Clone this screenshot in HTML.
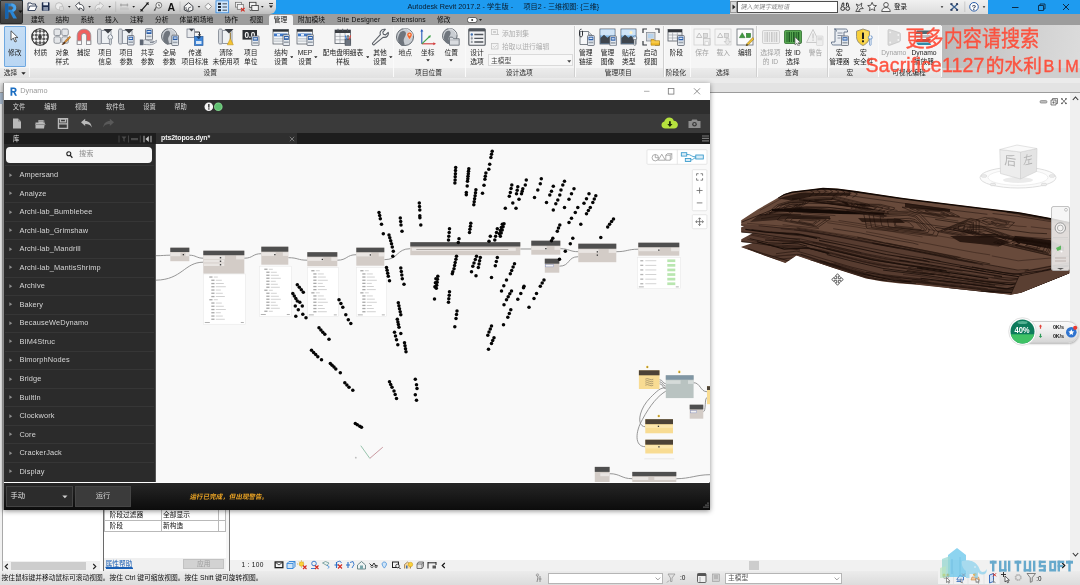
<!DOCTYPE html>
<html lang="zh"><head><meta charset="utf-8"><title>Autodesk Revit 2017.2 - Dynamo</title>
<style>
*{margin:0;padding:0;box-sizing:border-box}
html,body{width:1080px;height:585px;overflow:hidden;background:#fff}
body{font-family:"Liberation Sans","Noto Sans CJK SC",sans-serif;position:relative}
.b{position:absolute;display:block}
.t{position:absolute;white-space:nowrap}
.c{text-align:center}
.it{letter-spacing:.13px}
#blur{position:absolute;left:0;top:0;width:1080px;height:585px;overflow:hidden;filter:blur(.35px)}
</style></head>
<body>
<div id="blur">
<!-- title bar -->
<div class="b" style="left:0px;top:0px;width:1080px;height:14px;background:#1e9bf0;"></div>
<div class="b" style="left:23px;top:0px;width:253px;height:14px;background:linear-gradient(#e9e9e9,#d9d9d9 50%,#bdbdbd);border-radius:0 0 6px 0"></div>
<div class="b" style="left:730px;top:0px;width:258px;height:13.5px;background:linear-gradient(#f1f1f1,#dcdcdc);"></div>
<div class="b" style="left:730px;top:1px;width:7px;height:11.5px;background:#d9d9d9;border:0.5px solid #999"></div>
<svg class="b" style="left:731.5px;top:4px;" width="4" height="6" viewBox="0 0 4 6"><path d="M0.5 0.5L3.5 3L0.5 5.5z" fill="#222"/></svg>
<div class="b" style="left:737.3px;top:0.8px;width:100.9px;height:12px;background:#fff;border:.9px solid #4e4e4e"></div>
<div class="t " style="left:741px;top:3.34px;font-size:6.1px;line-height:7.32px;color:#858585;transform:skewX(-12deg)">键入关键字或短语</div>
<div class="t " style="left:894px;top:3.10px;font-size:6.5px;line-height:7.80px;color:#111;">登录</div>
<div class="t " style="left:407.5px;top:2.65px;font-size:7.25px;line-height:8.70px;color:#0a1a2a;">Autodesk Revit 2017.2 - 学生版 -</div>
<div class="t " style="left:523.5px;top:2.74px;font-size:7.1px;line-height:8.52px;color:#0a1a2a;">项目2 - 三维视图: {三维}</div>
<svg class="b" style="left:1008px;top:0px;" width="70" height="14" viewBox="0 0 70 14"><path d="M4 7.5h6.5" stroke="#0d2a44" stroke-width="1"/><path d="M30.5 5.5h5v5h-5zM32 5.5v-1.5h5v5h-1.5" fill="none" stroke="#0d2a44" stroke-width=".9"/><path d="M55 4l6 6M61 4l-6 6" stroke="#0d2a44" stroke-width="1"/></svg>
<!-- ribbon tabs -->
<div class="b" style="left:0px;top:14px;width:1080px;height:10.5px;background:#9d9d9d;"></div>
<div class="b" style="left:269px;top:14.5px;width:24px;height:10.5px;background:#f1f1f1;border-radius:2px 2px 0 0"></div>
<div class="t " style="left:31px;top:15.55px;font-size:6.75px;line-height:8.10px;color:#0c0c0c;">建筑</div>
<div class="t " style="left:55.5px;top:15.55px;font-size:6.75px;line-height:8.10px;color:#0c0c0c;">结构</div>
<div class="t " style="left:80.5px;top:15.55px;font-size:6.75px;line-height:8.10px;color:#0c0c0c;">系统</div>
<div class="t " style="left:105px;top:15.55px;font-size:6.75px;line-height:8.10px;color:#0c0c0c;">插入</div>
<div class="t " style="left:130px;top:15.55px;font-size:6.75px;line-height:8.10px;color:#0c0c0c;">注释</div>
<div class="t " style="left:155px;top:15.55px;font-size:6.75px;line-height:8.10px;color:#0c0c0c;">分析</div>
<div class="t " style="left:179.5px;top:15.55px;font-size:6.75px;line-height:8.10px;color:#0c0c0c;">体量和场地</div>
<div class="t " style="left:224.5px;top:15.55px;font-size:6.75px;line-height:8.10px;color:#0c0c0c;">协作</div>
<div class="t " style="left:249.5px;top:15.55px;font-size:6.75px;line-height:8.10px;color:#0c0c0c;">视图</div>
<div class="t " style="left:273.7px;top:15.55px;font-size:6.75px;line-height:8.10px;color:#0c0c0c;">管理</div>
<div class="t " style="left:298px;top:15.55px;font-size:6.75px;line-height:8.10px;color:#0c0c0c;">附加模块</div>
<div class="t " style="left:337px;top:15.55px;font-size:6.75px;line-height:8.10px;color:#0c0c0c;letter-spacing:.22px">Site Designer</div>
<div class="t " style="left:391.5px;top:15.55px;font-size:6.75px;line-height:8.10px;color:#0c0c0c;letter-spacing:.12px">Extensions</div>
<div class="t " style="left:437px;top:15.55px;font-size:6.75px;line-height:8.10px;color:#0c0c0c;">修改</div>
<svg class="b" style="left:467px;top:16.5px;" width="16" height="6" viewBox="0 0 16 6"><rect x=".5" y=".5" width="9.5" height="5" rx="2" fill="#fdfdfd" stroke="#333" stroke-width=".7"/><circle cx="5.2" cy="3" r="1" fill="#333"/><path d="M12 2h3l-1.500 2z" fill="#222"/></svg>
<div class="b" style="left:0px;top:0px;width:23px;height:23.5px;background:linear-gradient(#6b6b6b,#4a4a4a 50%,#3d3d3d);border:0.5px solid #2c2c2c;border-radius:0 0 2px 0"></div>
<svg class="b" style="left:2.5px;top:2px;" width="16" height="18" viewBox="0 0 16 18"><path d="M2 1.5h6.2c3.2 0 5 1.6 5 4.3c0 2.1-1.2 3.5-3.1 4l3.9 6.7h-3.7l-3.3-6.2h-1.7v6.2h-3.3zM5.3 4.2v3.6h2.5c1.4 0 2.1-.7 2.1-1.8c0-1.2-.8-1.8-2.1-1.8z" fill="#2a86d6"/><path d="M2 1.5h3.3v15h-3.3z" fill="#1763ad"/><path d="M8.2 1.5c3.2 0 5 1.6 5 4.3c0 2.100-1.2 3.500-3.100 4l-1.2-2c1-.2 1.6-.9 1.6-1.800c0-1.200-.8-1.800-2.100-1.800z" fill="#4aa3ea"/></svg>
<svg class="b" style="left:18px;top:10px;" width="5" height="4" viewBox="0 0 5 4"><path d="M.5 .5h4l-2 2.500z" fill="#111"/></svg>
<!-- ribbon -->
<div class="b" style="left:0px;top:24.5px;width:1080px;height:43.5px;background:#f5f5f5;"></div>
<div class="b" style="left:941px;top:24.5px;width:139px;height:43.5px;background:linear-gradient(100deg,#b9b9b9,#cfcfcf 55%,#dcdcdc);"></div>
<div class="b" style="left:0px;top:68px;width:1080px;height:9.5px;background:linear-gradient(#ececec,#e1e1e1);"></div>
<div class="b" style="left:941px;top:68px;width:139px;height:9.5px;background:#cfcfcf;"></div>
<div class="b" style="left:0px;top:77.5px;width:1080px;height:5.5px;background:#ebebeb;"></div>
<div class="b" style="left:4px;top:26px;width:21.5px;height:40.5px;background:linear-gradient(#c6def5,#b9d6f3);border:0.8px solid #6fa8e0;border-radius:1px"></div>
<svg class="b" style="left:10px;top:30px;" width="9" height="13" viewBox="0 0 9 13"><path d="M1 .8v9.400l2.300-2.100l1.700 3.900l1.500-.7l-1.700-3.700h3.100z" fill="#fff" stroke="#333" stroke-width=".8" stroke-linejoin="round"/></svg>
<div class="t c " style="left:-85.3px;width:200px;top:48.65px;font-size:6.75px;line-height:8.10px;color:#1c1c1c;">修改</div>
<div class="t " style="left:3.7px;top:69.35px;font-size:6.75px;line-height:8.10px;color:#1c1c1c;">选择</div>
<svg class="b" style="left:20.5px;top:71.5px;" width="5" height="3" viewBox="0 0 5 3"><path d="M.3 .3h4.400l-2.200 2.400z" fill="#222"/></svg>
<div class="b" style="left:28.5px;top:26px;width:0.8px;height:51px;background:#d0d0d0;"></div>
<div class="b" style="left:29.3px;top:26px;width:0.8px;height:51px;background:#fafafa;"></div>
<div class="b" style="left:392.5px;top:26px;width:0.8px;height:51px;background:#d0d0d0;"></div>
<div class="b" style="left:393.3px;top:26px;width:0.8px;height:51px;background:#fafafa;"></div>
<div class="b" style="left:464.5px;top:26px;width:0.8px;height:51px;background:#d0d0d0;"></div>
<div class="b" style="left:465.3px;top:26px;width:0.8px;height:51px;background:#fafafa;"></div>
<div class="b" style="left:573.7px;top:26px;width:0.8px;height:51px;background:#d0d0d0;"></div>
<div class="b" style="left:574.5px;top:26px;width:0.8px;height:51px;background:#fafafa;"></div>
<div class="b" style="left:663px;top:26px;width:0.8px;height:51px;background:#d0d0d0;"></div>
<div class="b" style="left:663.8px;top:26px;width:0.8px;height:51px;background:#fafafa;"></div>
<div class="b" style="left:689.5px;top:26px;width:0.8px;height:51px;background:#d0d0d0;"></div>
<div class="b" style="left:690.3px;top:26px;width:0.8px;height:51px;background:#fafafa;"></div>
<div class="b" style="left:756px;top:26px;width:0.8px;height:51px;background:#d0d0d0;"></div>
<div class="b" style="left:756.8px;top:26px;width:0.8px;height:51px;background:#fafafa;"></div>
<div class="b" style="left:827px;top:26px;width:0.8px;height:51px;background:#d0d0d0;"></div>
<div class="b" style="left:827.8px;top:26px;width:0.8px;height:51px;background:#fafafa;"></div>
<div class="b" style="left:877.5px;top:26px;width:0.8px;height:51px;background:#d0d0d0;"></div>
<div class="b" style="left:878.3px;top:26px;width:0.8px;height:51px;background:#fafafa;"></div>
<div class="b" style="left:940.5px;top:26px;width:0.8px;height:51px;background:#d0d0d0;"></div>
<div class="b" style="left:941.3px;top:26px;width:0.8px;height:51px;background:#fafafa;"></div>
<div class="t c " style="left:-59.5px;width:200px;top:48.95px;font-size:6.75px;line-height:8.10px;color:#1c1c1c;">材质</div>
<div class="t c " style="left:-37.8px;width:200px;top:48.95px;font-size:6.75px;line-height:8.10px;color:#1c1c1c;">对象</div>
<div class="t c " style="left:-37.8px;width:200px;top:57.85px;font-size:6.75px;line-height:8.10px;color:#1c1c1c;">样式</div>
<div class="t c " style="left:-16.5px;width:200px;top:48.95px;font-size:6.75px;line-height:8.10px;color:#1c1c1c;">捕捉</div>
<div class="t c " style="left:5px;width:200px;top:48.95px;font-size:6.75px;line-height:8.10px;color:#1c1c1c;">项目</div>
<div class="t c " style="left:5px;width:200px;top:57.85px;font-size:6.75px;line-height:8.10px;color:#1c1c1c;">信息</div>
<div class="t c " style="left:26.200000000000003px;width:200px;top:48.95px;font-size:6.75px;line-height:8.10px;color:#1c1c1c;">项目</div>
<div class="t c " style="left:26.200000000000003px;width:200px;top:57.85px;font-size:6.75px;line-height:8.10px;color:#1c1c1c;">参数</div>
<div class="t c " style="left:47.5px;width:200px;top:48.95px;font-size:6.75px;line-height:8.10px;color:#1c1c1c;">共享</div>
<div class="t c " style="left:47.5px;width:200px;top:57.85px;font-size:6.75px;line-height:8.10px;color:#1c1c1c;">参数</div>
<div class="t c " style="left:69.19999999999999px;width:200px;top:48.95px;font-size:6.75px;line-height:8.10px;color:#1c1c1c;">全局</div>
<div class="t c " style="left:69.19999999999999px;width:200px;top:57.85px;font-size:6.75px;line-height:8.10px;color:#1c1c1c;">参数</div>
<div class="t c " style="left:95px;width:200px;top:48.95px;font-size:6.75px;line-height:8.10px;color:#1c1c1c;">传递</div>
<div class="t c " style="left:95px;width:200px;top:57.85px;font-size:6.75px;line-height:8.10px;color:#1c1c1c;">项目标准</div>
<div class="t c " style="left:126px;width:200px;top:48.95px;font-size:6.75px;line-height:8.10px;color:#1c1c1c;">清除</div>
<div class="t c " style="left:126px;width:200px;top:57.85px;font-size:6.75px;line-height:8.10px;color:#1c1c1c;">未使用项</div>
<div class="t c " style="left:150.7px;width:200px;top:48.95px;font-size:6.75px;line-height:8.10px;color:#1c1c1c;">项目</div>
<div class="t c " style="left:150.7px;width:200px;top:57.85px;font-size:6.75px;line-height:8.10px;color:#1c1c1c;">单位</div>
<div class="t c " style="left:181px;width:200px;top:48.95px;font-size:6.75px;line-height:8.10px;color:#1c1c1c;">结构</div>
<div class="t c " style="left:181px;width:200px;top:57.85px;font-size:6.75px;line-height:8.10px;color:#1c1c1c;">设置</div>
<div class="t c " style="left:205px;width:200px;top:48.95px;font-size:6.75px;line-height:8.10px;color:#1c1c1c;">MEP</div>
<div class="t c " style="left:205px;width:200px;top:57.85px;font-size:6.75px;line-height:8.10px;color:#1c1c1c;">设置</div>
<div class="t c " style="left:243px;width:200px;top:48.95px;font-size:6.75px;line-height:8.10px;color:#1c1c1c;">配电盘明细表</div>
<div class="t c " style="left:243px;width:200px;top:57.85px;font-size:6.75px;line-height:8.10px;color:#1c1c1c;">样板</div>
<div class="t c " style="left:280px;width:200px;top:48.95px;font-size:6.75px;line-height:8.10px;color:#1c1c1c;">其他</div>
<div class="t c " style="left:280px;width:200px;top:57.85px;font-size:6.75px;line-height:8.10px;color:#1c1c1c;">设置</div>
<div class="t c " style="left:305.3px;width:200px;top:48.95px;font-size:6.75px;line-height:8.10px;color:#1c1c1c;">地点</div>
<div class="t c " style="left:327.7px;width:200px;top:48.95px;font-size:6.75px;line-height:8.10px;color:#1c1c1c;">坐标</div>
<svg class="b" style="left:425.7px;top:58.8px;" width="4" height="3" viewBox="0 0 4 3"><path d="M.2 .3h3.600l-1.800 2.200z" fill="#222"/></svg>
<div class="t c " style="left:351.2px;width:200px;top:48.95px;font-size:6.75px;line-height:8.10px;color:#1c1c1c;">位置</div>
<svg class="b" style="left:449.2px;top:58.8px;" width="4" height="3" viewBox="0 0 4 3"><path d="M.2 .3h3.600l-1.800 2.200z" fill="#222"/></svg>
<div class="t c " style="left:377px;width:200px;top:48.95px;font-size:6.75px;line-height:8.10px;color:#1c1c1c;">设计</div>
<div class="t c " style="left:377px;width:200px;top:57.85px;font-size:6.75px;line-height:8.10px;color:#1c1c1c;">选项</div>
<div class="t c " style="left:485.70000000000005px;width:200px;top:48.95px;font-size:6.75px;line-height:8.10px;color:#1c1c1c;">管理</div>
<div class="t c " style="left:485.70000000000005px;width:200px;top:57.85px;font-size:6.75px;line-height:8.10px;color:#1c1c1c;">链接</div>
<div class="t c " style="left:507.4px;width:200px;top:48.95px;font-size:6.75px;line-height:8.10px;color:#1c1c1c;">管理</div>
<div class="t c " style="left:507.4px;width:200px;top:57.85px;font-size:6.75px;line-height:8.10px;color:#1c1c1c;">图像</div>
<div class="t c " style="left:528.8px;width:200px;top:48.95px;font-size:6.75px;line-height:8.10px;color:#1c1c1c;">贴花</div>
<div class="t c " style="left:528.8px;width:200px;top:57.85px;font-size:6.75px;line-height:8.10px;color:#1c1c1c;">类型</div>
<div class="t c " style="left:550.6px;width:200px;top:48.95px;font-size:6.75px;line-height:8.10px;color:#1c1c1c;">启动</div>
<div class="t c " style="left:550.6px;width:200px;top:57.85px;font-size:6.75px;line-height:8.10px;color:#1c1c1c;">视图</div>
<div class="t c " style="left:576.2px;width:200px;top:48.95px;font-size:6.75px;line-height:8.10px;color:#1c1c1c;">阶段</div>
<div class="t c " style="left:602px;width:200px;top:48.95px;font-size:6.75px;line-height:8.10px;color:#a2a2a2;">保存</div>
<div class="t c " style="left:623.3px;width:200px;top:48.95px;font-size:6.75px;line-height:8.10px;color:#a2a2a2;">载入</div>
<div class="t c " style="left:644.8px;width:200px;top:48.95px;font-size:6.75px;line-height:8.10px;color:#1c1c1c;">编辑</div>
<div class="t c " style="left:670.5px;width:200px;top:48.95px;font-size:6.75px;line-height:8.10px;color:#a2a2a2;">选择项</div>
<div class="t c " style="left:670.5px;width:200px;top:57.85px;font-size:6.75px;line-height:8.10px;color:#a2a2a2;">的 ID</div>
<div class="t c " style="left:693px;width:200px;top:48.95px;font-size:6.75px;line-height:8.10px;color:#1c1c1c;">按 ID</div>
<div class="t c " style="left:693px;width:200px;top:57.85px;font-size:6.75px;line-height:8.10px;color:#1c1c1c;">选择</div>
<div class="t c " style="left:715.5px;width:200px;top:48.95px;font-size:6.75px;line-height:8.10px;color:#a2a2a2;">警告</div>
<div class="t c " style="left:739.5px;width:200px;top:48.95px;font-size:6.75px;line-height:8.10px;color:#1c1c1c;">宏</div>
<div class="t c " style="left:739.5px;width:200px;top:57.85px;font-size:6.75px;line-height:8.10px;color:#1c1c1c;">管理器</div>
<div class="t c " style="left:763.5px;width:200px;top:48.95px;font-size:6.75px;line-height:8.10px;color:#1c1c1c;">宏</div>
<div class="t c " style="left:763.5px;width:200px;top:57.85px;font-size:6.75px;line-height:8.10px;color:#1c1c1c;">安全性</div>
<div class="t c " style="left:793.8px;width:200px;top:48.95px;font-size:6.75px;line-height:8.10px;color:#a2a2a2;">Dynamo</div>
<div class="t c " style="left:824px;width:200px;top:48.95px;font-size:6.75px;line-height:8.10px;color:#1c1c1c;">Dynamo</div>
<div class="t c " style="left:824px;width:200px;top:57.85px;font-size:6.75px;line-height:8.10px;color:#1c1c1c;">播放器</div>
<svg class="b" style="left:289.5px;top:55.5px;" width="3.6" height="2.6" viewBox="0 0 3.6 2.6"><path d="M.1 .2h3.400l-1.700 2.100z" fill="#222"/></svg>
<svg class="b" style="left:314px;top:55.5px;" width="3.6" height="2.6" viewBox="0 0 3.6 2.6"><path d="M.1 .2h3.400l-1.700 2.100z" fill="#222"/></svg>
<svg class="b" style="left:365.5px;top:55.5px;" width="3.6" height="2.6" viewBox="0 0 3.6 2.6"><path d="M.1 .2h3.400l-1.700 2.100z" fill="#222"/></svg>
<svg class="b" style="left:389px;top:55.5px;" width="3.6" height="2.6" viewBox="0 0 3.6 2.6"><path d="M.1 .2h3.400l-1.700 2.100z" fill="#222"/></svg>
<div class="t c " style="left:110.19999999999999px;width:200px;top:69.35px;font-size:6.75px;line-height:8.10px;color:#2a2a2a;">设置</div>
<div class="t c " style="left:328.5px;width:200px;top:69.35px;font-size:6.75px;line-height:8.10px;color:#2a2a2a;">项目位置</div>
<div class="t c " style="left:419.20000000000005px;width:200px;top:69.35px;font-size:6.75px;line-height:8.10px;color:#2a2a2a;">设计选项</div>
<div class="t c " style="left:518.3px;width:200px;top:69.35px;font-size:6.75px;line-height:8.10px;color:#2a2a2a;">管理项目</div>
<div class="t c " style="left:576px;width:200px;top:69.35px;font-size:6.75px;line-height:8.10px;color:#2a2a2a;">阶段化</div>
<div class="t c " style="left:622.8px;width:200px;top:69.35px;font-size:6.75px;line-height:8.10px;color:#2a2a2a;">选择</div>
<div class="t c " style="left:691.8px;width:200px;top:69.35px;font-size:6.75px;line-height:8.10px;color:#2a2a2a;">查询</div>
<div class="t c " style="left:750px;width:200px;top:69.35px;font-size:6.75px;line-height:8.10px;color:#2a2a2a;">宏</div>
<div class="t c " style="left:809px;width:200px;top:69.35px;font-size:6.75px;line-height:8.10px;color:#2a2a2a;">可视化编程</div>
<div class="t " style="left:502px;top:29.85px;font-size:6.75px;line-height:8.10px;color:#adadad;">添加到集</div>
<div class="t " style="left:502px;top:43.45px;font-size:6.75px;line-height:8.10px;color:#adadad;">拾取以进行编辑</div>
<div class="b" style="left:488px;top:24.5px;width:85px;height:30px;overflow:hidden"></div>
<div class="b" style="left:487.5px;top:54.3px;width:85.5px;height:11.7px;background:#f8f8f8;border:0.6px solid #dadada"></div>
<div class="t " style="left:491px;top:56.55px;font-size:6.75px;line-height:8.10px;color:#4a4a4a;">主模型</div>
<svg class="b" style="left:567px;top:59.5px;" width="4.5" height="3" viewBox="0 0 4.5 3"><path d="M.2 .3h4l-2 2.400z" fill="#444"/></svg>
<!-- revit body -->
<div class="b" style="left:0px;top:83px;width:1080px;height:10px;background:#e3e3e3;"></div>
<div class="b" style="left:0px;top:92px;width:1080px;height:1px;background:#9b9b9b;"></div>
<div class="b" style="left:0px;top:93px;width:1080px;height:478px;background:#fff;"></div>
<div class="b" style="left:0px;top:93px;width:3px;height:478px;background:#f1f1f1;"></div>
<div class="b" style="left:2px;top:104px;width:0.8px;height:467px;background:#a9a9a9;"></div>
<div class="b" style="left:0px;top:93px;width:3px;height:11px;background:#a9bace;"></div>
<div class="b" style="left:1070px;top:93px;width:10px;height:467px;background:#f0f0f0;"></div>
<svg class="b" style="left:1072px;top:96px;" width="7" height="5" viewBox="0 0 7 5"><path d="M.8 4l2.700-3l2.700 3" fill="none" stroke="#333" stroke-width="1.1"/></svg>
<svg class="b" style="left:1072px;top:552px;" width="7" height="5" viewBox="0 0 7 5"><path d="M.8 1l2.700 3l2.700-3" fill="none" stroke="#333" stroke-width="1.1"/></svg>
<svg class="b" style="left:1039px;top:97px;" width="30" height="9" viewBox="0 0 30 9"><rect x="1" y="3.500" width="7" height="2.600" rx="1.200" fill="#bbb" stroke="#777" stroke-width=".6"/><path d="M12 3h5v5h-5zM13.500 3v-1.500h5v5h-1.500" fill="#eee" stroke="#555" stroke-width=".7"/><path d="M14.500 4.200v2.600M13.300 5.500h2.400" stroke="#555" stroke-width=".6"/><path d="M22.500 1.500l5 5.500M27.500 1.500l-5 5.500" stroke="#555" stroke-width=".8"/><rect x="22.200" y="1.200" width="1.400" height="1.400" fill="#555"/><rect x="26.200" y="1.200" width="1.400" height="1.400" fill="#555"/><rect x="22.200" y="5.700" width="1.400" height="1.400" fill="#555"/><rect x="26.200" y="5.700" width="1.400" height="1.400" fill="#555"/></svg>
<div class="b" style="left:100px;top:510px;width:4px;height:61px;background:#fbfbfb;"></div>
<div class="b" style="left:102.8px;top:510px;width:0.9px;height:61px;background:#6a6a6a;"></div>
<div class="b" style="left:104px;top:557.5px;width:122px;height:13px;background:#f0f0f0;"></div>
<div class="b" style="left:226px;top:510px;width:4px;height:61px;background:#f6f6f6;"></div>
<div class="b" style="left:229.3px;top:510px;width:0.9px;height:61px;background:#7a7a7a;"></div>
<div class="b" style="left:3px;top:561px;width:97px;height:9.5px;background:#f0f0f0;"></div>
<div class="b" style="left:11px;top:561.5px;width:75px;height:8.5px;background:#cdcdcd;"></div>
<svg class="b" style="left:4px;top:562.5px;" width="5" height="7" viewBox="0 0 5 7"><path d="M3.800 1l-2.600 2.500l2.600 2.500" fill="none" stroke="#222" stroke-width="1.100"/></svg>
<svg class="b" style="left:92px;top:562.5px;" width="5" height="7" viewBox="0 0 5 7"><path d="M1.200 1l2.600 2.500l-2.600 2.500" fill="none" stroke="#222" stroke-width="1.100"/></svg>
<div class="b" style="left:104px;top:510px;width:122px;height:21.5px;background:#fff;border-bottom:.7px solid #b9b9b9;border-left:.7px solid #b9b9b9"></div>
<div class="b" style="left:104px;top:519.8px;width:122px;height:0.7px;background:#b9b9b9;"></div>
<div class="b" style="left:161px;top:510px;width:0.7px;height:21.5px;background:#b9b9b9;"></div>
<div class="b" style="left:218.4px;top:510px;width:0.7px;height:21.5px;background:#b9b9b9;"></div>
<div class="b" style="left:225.3px;top:510px;width:0.7px;height:21.5px;background:#b9b9b9;"></div>
<div class="t " style="left:109.5px;top:510.75px;font-size:6.75px;line-height:8.10px;color:#111;">阶段过滤器</div>
<div class="t " style="left:163px;top:510.75px;font-size:6.75px;line-height:8.10px;color:#111;">全部显示</div>
<div class="t " style="left:109.5px;top:521.55px;font-size:6.75px;line-height:8.10px;color:#111;">阶段</div>
<div class="t " style="left:163px;top:521.55px;font-size:6.75px;line-height:8.10px;color:#111;">新构造</div>
<div class="t " style="left:105.5px;top:560.45px;font-size:6.75px;line-height:8.10px;color:#1a5fb4;text-decoration:underline;border-bottom:.6px solid #1a5fb4;line-height:7.400px">属性帮助</div>
<div class="b" style="left:183.3px;top:559px;width:40.7px;height:10px;background:#d2d2d2;border:.6px solid #c2c2c2"></div>
<div class="t c " style="left:103.69999999999999px;width:200px;top:560.25px;font-size:6.75px;line-height:8.10px;color:#9c9c9c;">应用</div>
<div class="b" style="left:1070px;top:560px;width:10px;height:11px;background:#f0f0f0;"></div>
<div class="b" style="left:230px;top:560px;width:840px;height:10.5px;background:#f1f1f1;"></div>
<div class="b" style="left:749px;top:561px;width:10px;height:9px;background:#cdcdcd;"></div>
<div class="t " style="left:241.5px;top:561.34px;font-size:6.6px;line-height:7.92px;color:#111;letter-spacing:.3px">1 : 100</div>
<svg class="b" style="left:441px;top:562px;" width="5" height="7" viewBox="0 0 5 7"><path d="M3.800 1l-2.600 2.500l2.600 2.500" fill="none" stroke="#111" stroke-width="1.100"/></svg>
<svg class="b" style="left:1061px;top:562px;" width="5" height="7" viewBox="0 0 5 7"><path d="M1.200 1l2.600 2.500l-2.600 2.500" fill="none" stroke="#111" stroke-width="1.100"/></svg>
<div class="b" style="left:0px;top:570.5px;width:1080px;height:0.8px;background:#fdfdfd;"></div>
<div class="b" style="left:0px;top:571.3px;width:1080px;height:13.7px;background:linear-gradient(#ececec,#dcdcdc);"></div>
<div class="t " style="left:1.5px;top:574.25px;font-size:6.75px;line-height:8.10px;color:#111;">按住鼠标键并移动鼠标可滚动视图。按住 Ctrl 键可缩放视图。按住 Shift 键可旋转视图。</div>
<div class="b" style="left:548px;top:573px;width:114.5px;height:10.5px;background:#fff;border:.6px solid #b5b5b5"></div>
<svg class="b" style="left:654.5px;top:576.5px;" width="6" height="4" viewBox="0 0 6 4"><path d="M.6 .6l2.300 2.300l2.300-2.300" fill="none" stroke="#888" stroke-width=".8"/></svg>
<div class="t " style="left:680px;top:574.40px;font-size:6.5px;line-height:7.80px;color:#111;">:0</div>
<div class="b" style="left:725px;top:573px;width:116.5px;height:10.5px;background:#fff;border:.6px solid #b5b5b5"></div>
<div class="t " style="left:728px;top:574.25px;font-size:6.75px;line-height:8.10px;color:#555;">主模型</div>
<svg class="b" style="left:833.5px;top:576.5px;" width="6" height="4" viewBox="0 0 6 4"><path d="M.6 .6l2.300 2.300l2.300-2.300" fill="none" stroke="#888" stroke-width=".8"/></svg>
<div class="t " style="left:1036.3px;top:574.72px;font-size:6.3px;line-height:7.56px;color:#111;">:0</div>
<!-- ribbon icons -->
<svg class="b" style="left:31.3px;top:27.6px;" width="18" height="18" viewBox="0 0 18 18"><defs><clipPath id="mc"><circle cx="9" cy="9" r="8.300"/></clipPath></defs><circle cx="9" cy="9" r="8.300" fill="#f4f4f4"/><g clip-path="url(#mc)"><g transform="rotate(45 9 9)" fill="#585858"><rect x="-4.50" y="-4.50" width="2.7" height="2.7"/><rect x="-4.50" y="0.90" width="2.7" height="2.7"/><rect x="-4.50" y="6.30" width="2.7" height="2.7"/><rect x="-4.50" y="11.70" width="2.7" height="2.7"/><rect x="-4.50" y="17.10" width="2.7" height="2.7"/><rect x="-1.80" y="-1.80" width="2.7" height="2.7"/><rect x="-1.80" y="3.60" width="2.7" height="2.7"/><rect x="-1.80" y="9.00" width="2.7" height="2.7"/><rect x="-1.80" y="14.40" width="2.7" height="2.7"/><rect x="-1.80" y="19.80" width="2.7" height="2.7"/><rect x="0.90" y="-4.50" width="2.7" height="2.7"/><rect x="0.90" y="0.90" width="2.7" height="2.7"/><rect x="0.90" y="6.30" width="2.7" height="2.7"/><rect x="0.90" y="11.70" width="2.7" height="2.7"/><rect x="0.90" y="17.10" width="2.7" height="2.7"/><rect x="3.60" y="-1.80" width="2.7" height="2.7"/><rect x="3.60" y="3.60" width="2.7" height="2.7"/><rect x="3.60" y="9.00" width="2.7" height="2.7"/><rect x="3.60" y="14.40" width="2.7" height="2.7"/><rect x="3.60" y="19.80" width="2.7" height="2.7"/><rect x="6.30" y="-4.50" width="2.7" height="2.7"/><rect x="6.30" y="0.90" width="2.7" height="2.7"/><rect x="6.30" y="6.30" width="2.7" height="2.7"/><rect x="6.30" y="11.70" width="2.7" height="2.7"/><rect x="6.30" y="17.10" width="2.7" height="2.7"/><rect x="9.00" y="-1.80" width="2.7" height="2.7"/><rect x="9.00" y="3.60" width="2.7" height="2.7"/><rect x="9.00" y="9.00" width="2.7" height="2.7"/><rect x="9.00" y="14.40" width="2.7" height="2.7"/><rect x="9.00" y="19.80" width="2.7" height="2.7"/><rect x="11.70" y="-4.50" width="2.7" height="2.7"/><rect x="11.70" y="0.90" width="2.7" height="2.7"/><rect x="11.70" y="6.30" width="2.7" height="2.7"/><rect x="11.70" y="11.70" width="2.7" height="2.7"/><rect x="11.70" y="17.10" width="2.7" height="2.7"/><rect x="14.40" y="-1.80" width="2.7" height="2.7"/><rect x="14.40" y="3.60" width="2.7" height="2.7"/><rect x="14.40" y="9.00" width="2.7" height="2.7"/><rect x="14.40" y="14.40" width="2.7" height="2.7"/><rect x="14.40" y="19.80" width="2.7" height="2.7"/><rect x="17.10" y="-4.50" width="2.7" height="2.7"/><rect x="17.10" y="0.90" width="2.7" height="2.7"/><rect x="17.10" y="6.30" width="2.7" height="2.7"/><rect x="17.10" y="11.70" width="2.7" height="2.7"/><rect x="17.10" y="17.10" width="2.7" height="2.7"/><rect x="19.80" y="-1.80" width="2.7" height="2.7"/><rect x="19.80" y="3.60" width="2.7" height="2.7"/><rect x="19.80" y="9.00" width="2.7" height="2.7"/><rect x="19.80" y="14.40" width="2.7" height="2.7"/><rect x="19.80" y="19.80" width="2.7" height="2.7"/></g></g><circle cx="9" cy="9" r="8.300" fill="none" stroke="#2f2f2f" stroke-width="1.100"/><circle cx="9" cy="9" r="1.900" fill="#3a3a3a"/></svg>
<svg class="b" style="left:53.2px;top:27.6px;" width="18" height="18" viewBox="0 0 18 18"><g fill="#e4e6e9" stroke="#7d838b" stroke-width=".8"><rect x="1" y="1" width="6.500" height="6.500" rx="1.500"/><rect x="8.800" y="1" width="6.500" height="6.500" rx="1.500"/><rect x="1" y="8.800" width="6.500" height="6.500" rx="1.500"/><rect x="8.800" y="8.800" width="6.500" height="6.500" rx="1.500"/></g><path d="M17.800 9.300l-5 5.200l-1.300-1.300l5.200-5z" fill="#d98a2b" stroke="#7a4a12" stroke-width=".4"/><path d="M12.700 14.600c-.8 1.800-2.300 2.400-4.200 2.300c1.200-.8 1.300-2 2.600-3.500z" fill="#5a3518"/></svg>
<svg class="b" style="left:74.5px;top:27.6px;" width="18" height="18" viewBox="0 0 18 18"><path d="M2.200 16.500v-8.700c0-4 2.900-6.600 6.800-6.600s6.800 2.600 6.800 6.600v8.700h-4.300v-8.600c0-1.600-1-2.500-2.500-2.500s-2.500.9-2.500 2.500v8.600z" fill="#f0605f" stroke="#8d8f94" stroke-width=".8"/><rect x="2.200" y="12.800" width="4.300" height="3.700" fill="#fafafa" stroke="#8d8f94" stroke-width=".8"/><rect x="11.500" y="12.800" width="4.300" height="3.700" fill="#fafafa" stroke="#8d8f94" stroke-width=".8"/></svg>
<svg class="b" style="left:96px;top:27.6px;" width="18" height="18" viewBox="0 0 18 18"><path d="M1.500 2.500c0-1 .7-1.500 1.500-1.500h1c.8 0 1.400.6 1.400 1.500v12c0 1-.6 1.500-1.400 1.500h-1c-.8 0-1.500-.5-1.500-1.500z" fill="#d5d9de" stroke="#6b7380" stroke-width=".7"/><path d="M5.400 2.500h9.600v13h-9.600z" fill="#eef1f4" stroke="#6b7380" stroke-width=".7"/><path d="M7.500 1h9l-4.500 4.600z" fill="#3b3f46"/><circle cx="14.300" cy="9.300" r="2.300" fill="#eef1f4" stroke="#6b7380" stroke-width=".8"/><rect x="13.400" y="10.800" width="1.800" height="6" rx=".8" fill="#eef1f4" stroke="#6b7380" stroke-width=".7"/><rect x="13.600" y="7" width="1.400" height="2" fill="#eef1f4"/></svg>
<svg class="b" style="left:117.2px;top:27.6px;" width="18" height="18" viewBox="0 0 18 18"><path d="M1.500 2.500c0-1 .7-1.500 1.500-1.500h1c.8 0 1.400.6 1.400 1.500v12c0 1-.6 1.500-1.400 1.500h-1c-.8 0-1.500-.5-1.500-1.500z" fill="#d5d9de" stroke="#6b7380" stroke-width=".7"/><path d="M5.400 2.500h9.600v13h-9.600z" fill="#eef1f4" stroke="#6b7380" stroke-width=".7"/><path d="M7.500 1h9l-4.500 4.600z" fill="#3b3f46"/><rect x="10.5" y="7.5" width="6.5" height="9.5" rx=".8" fill="#e6eaef" stroke="#4a525e" stroke-width=".7"/><rect x="11.5" y="8.7" width="4.5" height="3.4" fill="#2b5ea8"/><rect x="12.3" y="9.7" width="2.9" height="1.300" fill="#dce9f8"/><rect x="11.5" y="13.4" width="4.5" height="1.600" fill="#9aa3ad"/></svg>
<svg class="b" style="left:138.7px;top:27.6px;" width="18" height="18" viewBox="0 0 18 18"><path d="M.8 11.500h3.500v5.700h-3.500z" fill="#5d6673"/><path d="M4.300 12.500c1.500-1 3-1.200 4.300-.3c1 .7 2 .8 3.200.8h2.200c1 0 1 1.300 0 1.400h-3c2 .4 4.500-.6 6-1.800c1-.6 1.700.5.9 1.200c-2.300 2-4.500 3-7.500 3c-2 0-4-.5-6.100-.3z" fill="#dfe3e7" stroke="#69717c" stroke-width=".6"/><rect x="6.5" y="0.8" width="7" height="11" rx=".8" fill="#e6eaef" stroke="#4a525e" stroke-width=".7"/><rect x="7.5" y="2.0" width="5" height="4.0" fill="#2b5ea8"/><rect x="8.3" y="3.0" width="3.4" height="1.300" fill="#dce9f8"/><rect x="7.5" y="7.6" width="5" height="1.600" fill="#9aa3ad"/></svg>
<svg class="b" style="left:160.5px;top:27.6px;" width="18" height="18" viewBox="0 0 18 18"><circle cx="8.2" cy="8.2" r="7.7" fill="#c9cdd2" stroke="#555b63" stroke-width=".9"/><path d="M4.0 4.0c3.9-3.1 6.9 0 3.9 4.6c-2.3 3.9 1.5 5.4-0.8 8.5c-4.6-1.5-6.9-6.900-3.100-13.100z" fill="#6f757d"/><path d="M6.7 0.9a7.7 7.7 0 0 1 8.5 6.2" fill="none" stroke="#f3f4f6" stroke-width=".8"/><rect x="10.8" y="7.2" width="6.7" height="10.3" rx=".8" fill="#e6eaef" stroke="#4a525e" stroke-width=".7"/><rect x="11.8" y="8.4" width="4.7" height="3.7" fill="#2b5ea8"/><rect x="12.600000000000001" y="9.4" width="3.1" height="1.300" fill="#dce9f8"/><rect x="11.8" y="13.6" width="4.7" height="1.600" fill="#9aa3ad"/></svg>
<svg class="b" style="left:186.3px;top:27.6px;" width="18" height="18" viewBox="0 0 18 18"><rect x="1" y="1" width="7.500" height="8.500" fill="#e8eaed" stroke="#6b7380" stroke-width=".7"/><path d="M3 .8h5l-2.500 2.600z" fill="#3b3f46"/><path d="M9 4h4.500v2.800" fill="none" stroke="#2e3136" stroke-width="1"/><path d="M11.800 6.300h3.400l-1.700 2.200z" fill="#2e3136"/><rect x="8.500" y="8.500" width="8.500" height="9" fill="#3f86d8" stroke="#2c5f9e" stroke-width=".7"/><path d="M10 8.300h5.500l-2.750 3z" fill="#1f3f68"/><rect x="10" y="13" width="5.500" height="3" fill="#d9e8f8"/></svg>
<svg class="b" style="left:216.5px;top:27.6px;" width="18" height="18" viewBox="0 0 18 18"><path d="M1.500 2.500c0-1 .7-1.500 1.500-1.500h1c.8 0 1.400.6 1.400 1.500v12c0 1-.6 1.500-1.400 1.500h-1c-.8 0-1.500-.5-1.500-1.500z" fill="#d5d9de" stroke="#6b7380" stroke-width=".7"/><path d="M5.400 2.500h9.600v13h-9.600z" fill="#eef1f4" stroke="#6b7380" stroke-width=".7"/><path d="M7.500 1h9l-4.500 4.600z" fill="#3b3f46"/><path d="M13.300 4.500v7" stroke="#8a6a1f" stroke-width="1"/><path d="M13.300 10.500l3 6.300h-6z" fill="#f5c431" stroke="#b8860b" stroke-width=".5"/></svg>
<svg class="b" style="left:242px;top:27.6px;" width="18" height="18" viewBox="0 0 18 18"><rect x=".5" y="2" width="14.500" height="9.600" fill="#2c2f33"/><text x="7.700" y="9.800" text-anchor="middle" font-family="Liberation Sans,sans-serif" font-weight="bold" font-size="8.200" fill="#f4f4f4" letter-spacing="-.3">0.0</text><rect x="9.8" y="8" width="7.2" height="9.8" rx=".8" fill="#e6eaef" stroke="#4a525e" stroke-width=".7"/><rect x="10.8" y="9.2" width="5.2" height="3.5" fill="#2b5ea8"/><rect x="11.600000000000001" y="10.2" width="3.6" height="1.300" fill="#dce9f8"/><rect x="10.8" y="14.1" width="5.2" height="1.600" fill="#9aa3ad"/></svg>
<svg class="b" style="left:272px;top:27.6px;" width="18" height="18" viewBox="0 0 18 18"><rect x="1" y="1.500" width="15.500" height="14.500" fill="#f2f4f6" stroke="#4e545c" stroke-width=".7"/><rect x="1" y="1.500" width="15.500" height="2.200" fill="#2f3237"/><rect x="2" y="5.500" width="13.500" height="2.800" fill="#3f78c8"/><rect x="5" y="6" width="3" height="1.800" fill="#e8f0fb"/><rect x="2" y="10.200" width="9" height="1.200" fill="#bfc5cc"/><rect x="2" y="12.500" width="9" height="1.200" fill="#bfc5cc"/><rect x="11" y="6.8" width="6.8" height="10.7" rx=".8" fill="#e6eaef" stroke="#4a525e" stroke-width=".7"/><rect x="12" y="8.0" width="4.8" height="3.9" fill="#2b5ea8"/><rect x="12.8" y="9.0" width="3.2" height="1.300" fill="#dce9f8"/><rect x="12" y="13.4" width="4.8" height="1.600" fill="#9aa3ad"/></svg>
<svg class="b" style="left:296px;top:27.6px;" width="18" height="18" viewBox="0 0 18 18"><rect x="1" y="1.500" width="15.500" height="14.500" fill="#f2f4f6" stroke="#4e545c" stroke-width=".7"/><rect x="1" y="1.500" width="15.500" height="2.200" fill="#2f3237"/><rect x="2" y="5.500" width="13.500" height="2.800" fill="#3f78c8"/><rect x="5" y="6" width="3" height="1.800" fill="#e8f0fb"/><rect x="2" y="10.200" width="9" height="1.200" fill="#bfc5cc"/><rect x="2" y="12.500" width="9" height="1.200" fill="#bfc5cc"/><rect x="11" y="6.8" width="6.8" height="10.7" rx=".8" fill="#e6eaef" stroke="#4a525e" stroke-width=".7"/><rect x="12" y="8.0" width="4.8" height="3.9" fill="#2b5ea8"/><rect x="12.8" y="9.0" width="3.2" height="1.300" fill="#dce9f8"/><rect x="12" y="13.4" width="4.8" height="1.600" fill="#9aa3ad"/></svg>
<svg class="b" style="left:334px;top:27.6px;" width="18" height="18" viewBox="0 0 18 18"><rect x="1" y="2" width="15.500" height="13.500" fill="#f4f5f7" stroke="#555b63" stroke-width=".8"/><rect x="1" y="2" width="15.500" height="3" fill="#3a3d42"/><path d="M1 8.400h15.500M1 11.800h15.500M6 5v10.500M11 5v10.500" stroke="#8e949c" stroke-width=".6"/><path d="M4 .8v2.400M8.700 .8v2.400M13.400 .8v2.400" stroke="#555b63" stroke-width="1"/><rect x="11" y="11" width="5.800" height="6.500" fill="#6b737e" stroke="#3f454d" stroke-width=".5"/><path d="M12.500 11.500l-1-4" stroke="#2f74d0" stroke-width="1.100"/><path d="M14 11.500v-4.500" stroke="#3a3a3a" stroke-width="1"/><path d="M15.300 11.500l1.300-4" stroke="#e2453c" stroke-width="1.100"/></svg>
<svg class="b" style="left:371px;top:27.6px;" width="18" height="18" viewBox="0 0 18 18"><path d="M3.200 16.700c-.9.600-2.200-.7-1.500-1.700l7.700-8.300c-.9-2.400.5-5 3.300-5.400c.6-.1 1.200 0 1.600.1l-2.500 2.700l.6 2.200l2.200.6l2.600-2.600c.8 2.600-1.300 5.700-4.900 4.900z" fill="#f2f2f2" stroke="#585d64" stroke-width="1.100" stroke-linejoin="round"/></svg>
<svg class="b" style="left:396.3px;top:27.6px;" width="18" height="18" viewBox="0 0 18 18"><circle cx="9" cy="9" r="8.5" fill="#c9cdd2" stroke="#555b63" stroke-width=".9"/><path d="M4.3 4.3c4.2-3.4 7.7 0 4.2 5.100c-2.500 4.200 1.700 5.900-0.9 9.400c-5.100-1.700-7.700-7.700-3.400-14.400z" fill="#6f757d"/><path d="M7.300 0.9a8.5 8.5 0 0 1 9.4 6.800" fill="none" stroke="#f3f4f6" stroke-width=".8"/><path d="M13.500 4.200c1.500 0 2.600 1.100 2.600 2.500c0 1.800-2.600 4.800-2.600 4.800s-2.600-3-2.600-4.800c0-1.400 1.100-2.500 2.600-2.500z" fill="#f2642c" stroke="#fff" stroke-width=".4"/><circle cx="13.500" cy="6.700" r="1" fill="#ffd9a8"/></svg>
<svg class="b" style="left:419px;top:27.6px;" width="18" height="18" viewBox="0 0 18 18"><path d="M2.800 15.800v-13" stroke="#2457b8" stroke-width="1.100"/><path d="M2.800 1l1.500 2.600h-3z" fill="#2457b8"/><path d="M2.800 15.800h12.500" stroke="#d23b3b" stroke-width="1.100"/><path d="M17 15.800l-2.600 1.500v-3z" fill="#d23b3b"/><path d="M2.800 15.800l7.800-7.300" stroke="#3fa24a" stroke-width="1.100"/><path d="M12 7.300l-1 2.800l-1.900-2z" fill="#3fa24a"/></svg>
<svg class="b" style="left:442.3px;top:27.6px;" width="18" height="18" viewBox="0 0 18 18"><circle cx="7.8" cy="7.8" r="7.3" fill="#c9cdd2" stroke="#555b63" stroke-width=".9"/><path d="M3.800 3.800c3.600-2.900 6.600 0 3.600 4.400c-2.200 3.600 1.500 5.100-0.7 8.0c-4.400-1.500-6.600-6.600-2.900-12.400z" fill="#6f757d"/><path d="M6.300 0.9a7.3 7.3 0 0 1 8.0 5.800" fill="none" stroke="#f3f4f6" stroke-width=".8"/><path d="M7.500 9.200h3l1.200 1.500h5.500v6.500h-9.700z" fill="#d9dce0" stroke="#5d646d" stroke-width=".8"/><path d="M7.500 12h9.700" stroke="#8c939b" stroke-width=".5"/></svg>
<svg class="b" style="left:468px;top:27.6px;" width="18" height="18" viewBox="0 0 18 18"><rect x=".8" y=".8" width="16.400" height="16.400" rx="1" fill="#f0f1f3" stroke="#50555c" stroke-width="1.100"/><rect x=".8" y=".8" width="16.400" height="2.600" fill="#50555c"/><circle cx="3.800" cy="6.500" r="1.200" fill="#3f6fb0"/><circle cx="3.800" cy="10.300" r="1.100" fill="#8c939b"/><circle cx="3.800" cy="14" r="1.100" fill="#8c939b"/><path d="M6.300 6.500h9M6.300 10.300h9M6.300 14h9" stroke="#50555c" stroke-width="1.300"/><path d="M3.800 7.700v5" stroke="#8c939b" stroke-width=".5"/></svg>
<svg class="b" style="left:576.8px;top:27.6px;" width="18" height="18" viewBox="0 0 18 18"><path d="M3 3.500h8.500l3.500 3.500v9.500h-12z" fill="#f6f7f8" stroke="#5d646d" stroke-width=".8"/><path d="M11.500 3.500v3.500h3.500" fill="#dfe2e6" stroke="#5d646d" stroke-width=".6"/><path d="M4.500 1.200c-1.300 0-2 .8-2 2v4c0 1 .6 1.600 1.500 1.600s1.500-.6 1.500-1.600v-4.400" fill="none" stroke="#2f3237" stroke-width="1"/><rect x="10.5" y="7.5" width="6.8" height="10" rx=".8" fill="#e6eaef" stroke="#4a525e" stroke-width=".7"/><rect x="11.5" y="8.7" width="4.8" height="3.600" fill="#2b5ea8"/><rect x="12.3" y="9.7" width="3.2" height="1.300" fill="#dce9f8"/><rect x="11.5" y="13.7" width="4.8" height="1.600" fill="#9aa3ad"/></svg>
<svg class="b" style="left:598.6px;top:27.6px;" width="18" height="18" viewBox="0 0 18 18"><rect x="1" y="1" width="15" height="15" fill="#7fb6e8" stroke="#4e5661" stroke-width=".8"/><rect x="1.400" y="1.400" width="14.200" height="6" fill="#cfe3f6"/><path d="M1.400 15.600v-5.600l3.600-3.200l3.400 3l2.600-2l4.600 4.400v3.400z" fill="#3e444c"/><rect x="10.8" y="8" width="6.600" height="9.8" rx=".8" fill="#e6eaef" stroke="#4a525e" stroke-width=".7"/><rect x="11.8" y="9.2" width="4.6" height="3.500" fill="#2b5ea8"/><rect x="12.600000000000001" y="10.2" width="3.0" height="1.300" fill="#dce9f8"/><rect x="11.8" y="14.1" width="4.6" height="1.600" fill="#9aa3ad"/></svg>
<svg class="b" style="left:620px;top:27.6px;" width="18" height="18" viewBox="0 0 18 18"><rect x="1" y="1" width="15" height="15" fill="#7fb6e8" stroke="#4e5661" stroke-width=".8"/><rect x="1.400" y="1.400" width="14.200" height="6" fill="#cfe3f6"/><path d="M1.400 15.600v-5.600l3.600-3.200l3.400 3l2.600-2l4.600 4.400v3.400z" fill="#3e444c"/><circle cx="11" cy="4.500" r="1.500" fill="#fff3c4"/><circle cx="14.800" cy="10" r="2" fill="#f2f4f6" stroke="#5d646d" stroke-width=".7"/><rect x="14" y="11.500" width="1.600" height="6" rx=".7" fill="#f2f4f6" stroke="#5d646d" stroke-width=".6"/><rect x="14.200" y="7.800" width="1.200" height="1.800" fill="#7fb6e8"/></svg>
<svg class="b" style="left:641.8px;top:27.6px;" width="18" height="18" viewBox="0 0 18 18"><path d="M1 5v-4h4M13 1h4v4M17 13v4h-4M5 17h-4v-4" fill="none" stroke="#33373c" stroke-width="1.200"/><rect x="4.500" y="4.500" width="8.500" height="8.500" fill="#d4d8dd" stroke="#7d848d" stroke-width=".7"/><rect x="6" y="6" width="5.500" height="4" fill="#b7d3ec"/><path d="M9 11.500h3l1 1.200h4.500v4.500h-8.500z" fill="#f3bd2a" stroke="#a87a10" stroke-width=".6"/><path d="M9 14h8.500" stroke="#fbe08a" stroke-width=".7"/></svg>
<svg class="b" style="left:667.2px;top:27.6px;" width="18" height="18" viewBox="0 0 18 18"><rect x="1" y="1.500" width="14" height="11.500" fill="#f4f5f7" stroke="#555b63" stroke-width=".8"/><rect x="1" y="1.500" width="14" height="2.800" fill="#33363b"/><path d="M1 7h14M1 10h14M5.600 4.300v8.700M10.300 4.300v8.700" stroke="#8e949c" stroke-width=".6"/><rect x="10.5" y="7.5" width="6.8" height="10" rx=".8" fill="#e6eaef" stroke="#4a525e" stroke-width=".7"/><rect x="11.5" y="8.7" width="4.8" height="3.600" fill="#2b5ea8"/><rect x="12.3" y="9.7" width="3.2" height="1.300" fill="#dce9f8"/><rect x="11.5" y="13.7" width="4.8" height="1.600" fill="#9aa3ad"/></svg>
<svg class="b" style="left:692.8px;top:27.6px;" width="18" height="18" viewBox="0 0 18 18"><rect x="1" y="1" width="16" height="16" fill="#f5f5f5" stroke="#cfcfcf" stroke-width=".7"/><path d="M3.500 9.500l2.700-4.500l2.700 4.500z" fill="none" stroke="#bcbcbc" stroke-width=".9"/><rect x="10.500" y="5.500" width="4" height="4" fill="#dcdcdc" stroke="#bcbcbc" stroke-width=".7"/><rect x="10.500" y="10.500" width="6.500" height="6.500" fill="#ececec" stroke="#bdbdbd" stroke-width=".7"/><rect x="12" y="13.800" width="3.500" height="3.200" fill="#fafafa" stroke="#c4c4c4" stroke-width=".5"/></svg>
<svg class="b" style="left:714.4px;top:27.6px;" width="18" height="18" viewBox="0 0 18 18"><rect x="1" y="1" width="16" height="16" fill="#f5f5f5" stroke="#cfcfcf" stroke-width=".7"/><path d="M3.500 9.500l2.700-4.500l2.700 4.500z" fill="none" stroke="#bcbcbc" stroke-width=".9"/><rect x="10.500" y="5.500" width="4" height="4" fill="#dcdcdc" stroke="#bcbcbc" stroke-width=".7"/><path d="M12 10.500h3v3h1.800l-3.300 3.500l-3.300-3.500h1.800z" fill="#e6e6e6" stroke="#bdbdbd" stroke-width=".6"/></svg>
<svg class="b" style="left:735.5px;top:27.6px;" width="18" height="18" viewBox="0 0 18 18"><rect x="1" y="1" width="16" height="16" fill="#fcfcfc" stroke="#767b82" stroke-width=".9"/><path d="M3.300 9.700l2.900-4.900l2.900 4.900z" fill="#3f9a3f" stroke="#2c6e2c" stroke-width=".5"/><rect x="10.300" y="5.300" width="4.300" height="4.300" fill="#3f9a3f" stroke="#2c6e2c" stroke-width=".5"/><path d="M16.800 9.500l1.400 1.400l-6 6.200l-2.200.8l.8-2.200z" fill="#f2c230" stroke="#7a5c10" stroke-width=".5"/><path d="M10 17.900l.8-2.200l1.400 1.400z" fill="#333"/></svg>
<svg class="b" style="left:761.6px;top:27.6px;" width="18" height="18" viewBox="0 0 18 18"><rect x=".5" y="2.500" width="17" height="13" rx="1.200" fill="#efefef" stroke="#c6c6c6" stroke-width=".8"/><rect x="2.5" y="4" width="1" height="10" fill="#c9c9c9"/><rect x="4.500" y="4" width="1.600" height="10" fill="#c9c9c9"/><rect x="7.2" y="4" width="0.8" height="10" fill="#c9c9c9"/><rect x="9" y="4" width="1.600" height="10" fill="#c9c9c9"/><rect x="11.7" y="4" width="1" height="10" fill="#c9c9c9"/><rect x="13.7" y="4" width="1.600" height="10" fill="#c9c9c9"/></svg>
<svg class="b" style="left:784px;top:27.6px;" width="18" height="18" viewBox="0 0 18 18"><rect x=".5" y="2.500" width="17" height="13" rx="1.200" fill="#58a852" stroke="#2c6e2c" stroke-width=".8"/><rect x="2.5" y="4" width="1" height="10" fill="#1f5f24"/><rect x="4.500" y="4" width="1.600" height="10" fill="#1f5f24"/><rect x="7.2" y="4" width="0.8" height="10" fill="#1f5f24"/><rect x="9" y="4" width="1.600" height="10" fill="#1f5f24"/><rect x="11.7" y="4" width="1" height="10" fill="#1f5f24"/><rect x="13.7" y="4" width="1.600" height="10" fill="#1f5f24"/><path d="M11 9v8l1.900-1.700l1.300 2.700l1.300-.6l-1.300-2.700h2.500z" fill="#f4f4f4" stroke="#555" stroke-width=".6" stroke-linejoin="round"/></svg>
<svg class="b" style="left:806px;top:27.6px;" width="18" height="18" viewBox="0 0 18 18"><path d="M7 1.500l6.500 13h-13z" fill="#f0f0f0" stroke="#c6c6c6" stroke-width=".9" stroke-linejoin="round"/><rect x="6.400" y="5.500" width="1.300" height="5" fill="#c9c9c9"/><rect x="6.400" y="11.500" width="1.300" height="1.400" fill="#c9c9c9"/><rect x="10.500" y="8" width="6.500" height="9.500" rx=".8" fill="#ededed" stroke="#cfcfcf" stroke-width=".6"/><rect x="11.500" y="9.300" width="4.500" height="3" fill="#dadada"/></svg>
<svg class="b" style="left:830.5px;top:27.6px;" width="18" height="18" viewBox="0 0 18 18"><path d="M3.500 1h11c1.500 0 2 1 2 2v1h-3.500v10c0 2-1 3-2.500 3h-8c-1.300 0-2-1-2-2v-1h3.500v-10c0-2 .5-3-.5-3z" fill="#e9edf2" stroke="#4f5f78" stroke-width=".8" stroke-linejoin="round"/><path d="M3.500 1c1.500 0 2 1 2 2.500" fill="none" stroke="#4f5f78" stroke-width=".8"/><path d="M6.500 5h5M6.500 7.500h5M6.500 10h3" stroke="#7d8796" stroke-width=".9"/><rect x="10.5" y="8" width="7" height="9.5" rx=".8" fill="#e6eaef" stroke="#4a525e" stroke-width=".7"/><rect x="11.5" y="9.2" width="5" height="3.4" fill="#2b5ea8"/><rect x="12.3" y="10.2" width="3.4" height="1.300" fill="#dce9f8"/><rect x="11.5" y="13.9" width="5" height="1.600" fill="#9aa3ad"/></svg>
<svg class="b" style="left:855px;top:27.6px;" width="18" height="18" viewBox="0 0 18 18"><path d="M8 1l6.500 2.200v5.300c0 4.500-3 7.500-6.500 9c-3.500-1.500-6.500-4.500-6.500-9v-5.300z" fill="#f7cf3a" stroke="#8f8a78" stroke-width=".9"/><path d="M8 2.300l5.200 1.800v4.400c0 3.700-2.400 6.300-5.200 7.600z" fill="#fbe27a" opacity=".6"/><rect x="7" y="4.500" width="2" height="6.500" rx=".5" fill="#1d1d1d"/><rect x="7" y="12.200" width="2" height="2" rx=".5" fill="#1d1d1d"/><circle cx="15.300" cy="9.500" r="1.900" fill="#f3f7fc" stroke="#3f74b8" stroke-width=".7"/><rect x="14.500" y="11" width="1.600" height="6.300" rx=".7" fill="#f3f7fc" stroke="#3f74b8" stroke-width=".6"/><rect x="14.700" y="7.300" width="1.200" height="1.900" fill="#f3f3f3"/></svg>
<svg class="b" style="left:885px;top:27.6px;" width="18" height="18" viewBox="0 0 18 18"><path d="M3 2.500c0-.8.700-1.300 1.500-1l10 3.200c.7.200 1 .8 1 1.500v6c0 .7-.4 1.200-1 1.500l-10 3.700c-.8.300-1.500-.3-1.500-1z" fill="#d9d9d9" stroke="#c3c3c3" stroke-width=".7"/><circle cx="5.200" cy="4.300" r=".9" fill="#f5f5f5"/><circle cx="13.300" cy="7" r=".9" fill="#f5f5f5"/><circle cx="13.300" cy="12" r=".9" fill="#f5f5f5"/><circle cx="5.200" cy="14.500" r=".9" fill="#f5f5f5"/></svg>
<svg class="b" style="left:914.5px;top:27.6px;" width="18" height="18" viewBox="0 0 18 18"><path d="M2 2.500h14l-2 3.500h-14z" fill="#4b6b73"/><path d="M1 7h15l-1.500 3h-15z" fill="#b9c0c4"/><path d="M2 11h14l-2 3h-14z" fill="#cf4a3c"/><path d="M1 14.500h14l1 2.500h-13z" fill="#2f8aa8"/></svg>
<svg class="b" style="left:491px;top:29.3px;" width="8" height="7" viewBox="0 0 8 7"><rect x=".5" y=".5" width="6" height="5" fill="#f3f3f3" stroke="#c2c2c2" stroke-width=".8"/><rect x="2" y="2" width="3" height="2" fill="#d0d0d0"/><path d="M5.500 5.500h2.500" stroke="#c2c2c2" stroke-width=".8"/></svg>
<svg class="b" style="left:491px;top:43px;" width="8" height="7.5" viewBox="0 0 8 7.5"><rect x=".5" y=".5" width="6.500" height="5.500" fill="#f3f3f3" stroke="#c2c2c2" stroke-width=".8"/><path d="M2 3l1.500 1.500l2.500-2.500" fill="none" stroke="#c9c9c9" stroke-width=".8"/></svg>
<!-- qat icons -->
<svg class="b" style="left:0px;top:0px;" width="280" height="14" viewBox="0 0 280 14"><path d="M28 10.500v-7.500h3l.8 1h3.700v1.500" fill="#fff" stroke="#27344f" stroke-width=".9"/><path d="M28 10.500l1.800-4.500h7.200l-2 4.500z" fill="#fff" stroke="#27344f" stroke-width=".9" stroke-linejoin="round"/><rect x="41.800" y="2.300" width="7.700" height="8.400" rx=".6" fill="#1e2d4d"/><rect x="43.300" y="2.300" width="4.700" height="3" fill="#e6ebf3"/><rect x="43.300" y="7" width="4.700" height="3.700" fill="#8b97ad"/><circle cx="59" cy="6.300" r="3.600" fill="#ededed" stroke="#b5b5b5" stroke-width=".8"/><rect x="59.500" y="6.500" width="4" height="4" rx=".8" fill="#d9d9d9" stroke="#b5b5b5" stroke-width=".6"/><path d="M68.0 6.0h2.600l-1.300 1.700z" fill="#222"/><path d="M75.500 5.500l3.800-3.300v2c3 0 4.600 2 4.600 4.500c0 .9-.2 1.600-.6 2.300c-.3-1.900-1.500-3-4-3v2.200z" fill="#fff" stroke="#2b2f36" stroke-width=".8" stroke-linejoin="round"/><path d="M88.300 6.0h2.600l-1.300 1.700z" fill="#222"/><path d="M103.500 5.500l-3.800-3.300v2c-3 0-4.600 2-4.600 4.500c0 .9.200 1.600.6 2.300c.3-1.900 1.500-3 4-3v2.200z" fill="#ececec" stroke="#b5b5b5" stroke-width=".8" stroke-linejoin="round"/><path d="M108.400 6.0h2.600l-1.300 1.700z" fill="#222"/><path d="M115.700 1.500v10.500" stroke="#b0b0b0" stroke-width=".6"/><path d="M180 1.500v10.500" stroke="#b0b0b0" stroke-width=".6"/><path d="M120 5h8.300M120 9h8.300" stroke="#9a9a9a" stroke-width="1"/><path d="M121 3.500v3M127.300 3.500v3" stroke="#9a9a9a" stroke-width=".8"/><rect x="120" y="7.500" width="8.300" height="2.600" fill="#c6c6c6"/><path d="M132.39999999999998 6.0h2.600l-1.300 1.700z" fill="#222"/><path d="M141.300 10.700l6.500-7.500" stroke="#111" stroke-width="1.100"/><path d="M140.300 11.800l.6-2.800l2 1.800zM148.800 2l-.6 2.800l-2-1.800z" fill="#111"/><path d="M140.500 9.200l2.400 2.400M146.300 2.600l2.400 2.400" stroke="#111" stroke-width=".8"/><path d="M154.500 10.500l2-4" stroke="#555" stroke-width="1.100"/><path d="M153.800 11.300l.3-2.300l1.700 1z" fill="#555"/><circle cx="158.800" cy="5.300" r="2.900" fill="#f3f3f3" stroke="#555" stroke-width=".8"/><path d="M158.800 3.800v2h1.300" fill="none" stroke="#333" stroke-width=".7"/><text x="171.400" y="11" text-anchor="middle" font-family="Liberation Sans,sans-serif" font-weight="bold" font-size="10.500" fill="#111">A</text><path d="M184.300 6.300l4.300-3.600l4.300 3.600v3.700l-4.300 1.700l-4.300-1.700z" fill="#f4f4f4" stroke="#2b2f36" stroke-width=".9" stroke-linejoin="round"/><path d="M186 7v2.600l2.600 1v-2.700l2.600-1" fill="none" stroke="#2b2f36" stroke-width=".7"/><path d="M197.700 6.0h2.600l-1.300 1.700z" fill="#222"/><path d="M204.800 6.500l3.400-3.300l3.400 3.300l-3.400 3.300z" fill="#f7f7f7" stroke="#8d8d8d" stroke-width=".9"/><rect x="216" y=".8" width="12.600" height="12" fill="#cfe5fa" stroke="#3c8ee0" stroke-width=".9"/><rect x="218" y="2.800" width="3" height="2" fill="#1d2430"/><rect x="218" y="6" width="3" height="2" fill="#1d2430"/><rect x="218" y="9.200" width="3" height="2" fill="#1d2430"/><path d="M222.500 3.800h4.500M222.500 7h4.500M222.500 10.200h4.500" stroke="#1d2430" stroke-width=".8"/><rect x="235.500" y="2.300" width="6" height="4.800" fill="#f2f2f2" stroke="#666" stroke-width=".7"/><rect x="237.300" y="4.500" width="6" height="4.800" fill="#f2f2f2" stroke="#666" stroke-width=".7"/><path d="M241 8l3.600 3.400M244.600 8l-3.600 3.400" stroke="#d42a20" stroke-width="1.100"/><rect x="249.500" y="2.300" width="6.500" height="5" fill="#f2f2f2" stroke="#333" stroke-width=".8"/><rect x="251.800" y="5.500" width="6.500" height="5" fill="#f2f2f2" stroke="#333" stroke-width=".8"/><path d="M249.300 9.500l1.300 1.300l1.300-1.300" fill="none" stroke="#333" stroke-width=".7"/><path d="M261.0 6.0h2.600l-1.300 1.700z" fill="#222"/><path d="M269 3.500h4" stroke="#222" stroke-width=".9"/><path d="M269 5.500h4l-2 2.400z" fill="#222"/></svg>
<!-- infocenter icons -->
<svg class="b" style="left:835px;top:0px;" width="160" height="14" viewBox="835 0 160 14"><g fill="none" stroke="#222" stroke-width=".9"><circle cx="842.700" cy="8.500" r="1.900"/><circle cx="847.700" cy="8.500" r="1.900"/><path d="M841.500 6.500l1-3.500h1.300v3M846.500 6v-3h1.300l1 3.500"/></g><g fill="none" stroke="#333" stroke-width=".8"><path d="M856 11l2-3.500l-1.800-3.500l2.800 1.500l2.800-2.500l-.5 3.500l2 2l-3.300.3l-1.500 2.700"/><path d="M855.500 11.500h5"/></g><path d="M872.100 2.300l1.300 3l3.100.3l-2.400 2l.8 3.100l-2.800-1.700l-2.800 1.700l.8-3.100l-2.400-2l3.100-.3z" fill="#f7f7f7" stroke="#333" stroke-width=".8" stroke-linejoin="round"/><circle cx="886" cy="4.800" r="2.300" fill="#f4f4f4" stroke="#333" stroke-width=".8"/><path d="M881.700 11.500c.3-2.800 2-4 4.300-4s4 1.200 4.300 4z" fill="#f4f4f4" stroke="#333" stroke-width=".8"/><path d="M940.700 6.200h2.600l-1.300 1.700z" fill="#222"/><path d="M982.700 6.200h2.600l-1.300 1.700z" fill="#222"/><path d="M950.500 3.800l7.500 6.400M958 3.800l-7.500 6.400" stroke="#3a5f8f" stroke-width="1.300"/><path d="M950.500 3.800l2 .2M958 3.800l-2 .2M950.500 10.200l2-.2M958 10.200l-2-.2" stroke="#1d2d4d" stroke-width="1.300"/><path d="M964.800 1.500v10.500" stroke="#b5b5b5" stroke-width=".6"/><circle cx="974" cy="6.800" r="4.300" fill="#fdfdfd" stroke="#2c5ea8" stroke-width="1"/><text x="974" y="9.500" text-anchor="middle" font-family="Liberation Sans,sans-serif" font-weight="bold" font-size="7.200" fill="#1d2d4d">?</text></svg>
<!-- view control icons -->
<svg class="b" style="left:270px;top:558px;" width="170" height="13" viewBox="270 558 170 13"><rect x="274.500" y="561.300" width="9" height="7" fill="#1f1f1f"/><rect x="275.800" y="562.600" width="6.400" height="4.400" fill="#f4f4f4"/><path d="M275.800 562.600l3.200 2.400l3.200-2.400" fill="none" stroke="#1f1f1f" stroke-width=".8"/><path d="M287 563.500l2-2h6v5l-2 2h-6z" fill="#cfe4f7" stroke="#2a7fd6" stroke-width=".9" stroke-linejoin="round"/><path d="M287 563.500h6v5M293 563.500l2-2" fill="none" stroke="#2a7fd6" stroke-width=".8"/><circle cx="301.500" cy="564" r="2.300" fill="#fbd23a" stroke="#c8920c" stroke-width=".5"/><path d="M301.500 560.300v1M298 564h-1M301.500 567.700v-1M299 561.500l.7.700M304 561.500l-.7.700" stroke="#d9a010" stroke-width=".7"/><path d="M303 565.500l3.500 3.500M306.500 565.500l-3.500 3.500" stroke="#d42a20" stroke-width="1.100"/><circle cx="314" cy="563.500" r="2.300" fill="none" stroke="#2a6fc8" stroke-width=".9"/><path d="M311 568.500h5" stroke="#2a6fc8" stroke-width=".9"/><path d="M315 565.500l3.500 3.500M318.500 565.500l-3.500 3.500" stroke="#d42a20" stroke-width="1.100"/><path d="M322.500 563l3-1.500l3.500 1.500l-2 2.500z" fill="#e6f0ee" stroke="#5b8a8a" stroke-width=".7"/><path d="M327 565.500c2 0 2.500 2 1 3" fill="none" stroke="#2a7fd6" stroke-width=".9"/><path d="M334.500 565h4M336.500 562v6" stroke="#2a6fc8" stroke-width="1.100"/><path d="M338 564.500l4 4M342 564.500l-4 4" stroke="#d42a20" stroke-width="1.100"/><path d="M337 562l3-1l1.500 2" fill="none" stroke="#2a6fc8" stroke-width=".8"/><path d="M346 565h4M348 562v6" stroke="#2a6fc8" stroke-width="1.100"/><path d="M350 562.500l3-1l1 3l-2 3.500" fill="none" stroke="#2a6fc8" stroke-width=".9"/><path d="M357.500 565l4-3.500l4 3.500v4h-8z" fill="#eef3f3" stroke="#4e6e72" stroke-width=".8" stroke-linejoin="round"/><rect x="360" y="565.500" width="3" height="3.500" fill="#7aa6aa"/><path d="M369.500 563.500l2.500 2.500l2-3l2 3.500l1.500-1.500" fill="none" stroke="#222" stroke-width=".9"/><circle cx="372" cy="566.500" r="1.200" fill="none" stroke="#222" stroke-width=".6"/><circle cx="376" cy="566.500" r="1.200" fill="none" stroke="#222" stroke-width=".6"/><path d="M384.300 562c1.300 0 2.200 1 2.200 2.100c0 1.400-2.200 4-2.200 4s-2.200-2.600-2.200-4c0-1.100.9-2.100 2.200-2.100z" fill="#cfe4f7" stroke="#2a7fd6" stroke-width=".7"/><rect x="392.500" y="562" width="6" height="5.500" fill="#f4f4f4" stroke="#1f1f1f" stroke-width="1"/><circle cx="397.500" cy="566" r="1.800" fill="#f4f4f4" stroke="#1f1f1f" stroke-width=".8"/><path d="M398.800 567.300l1.700 1.700" stroke="#1f1f1f" stroke-width="1"/><path d="M404.500 568.500v-4l3-2.500l3 2.500v4" fill="#f6d7a0" stroke="#8a6a3a" stroke-width=".7"/><circle cx="410.500" cy="564.500" r="2.200" fill="#fbd23a" stroke="#c8920c" stroke-width=".5"/><rect x="406" y="565.500" width="1.500" height="3" fill="#3f6fb0"/><path d="M417 564l1.500-2h5v4.500l-1.500 2h-5z" fill="#e2e2e2" stroke="#555" stroke-width=".8" stroke-linejoin="round"/><path d="M417 564h5v4.500M422 564l1.500-2" fill="none" stroke="#555" stroke-width=".7"/><path d="M428 562v6.500M428 562.800h8M436 562v3" fill="none" stroke="#222" stroke-width="1"/><rect x="432.500" y="565.500" width="3.500" height="3" fill="#555"/></svg>
<!-- status bar icons -->
<svg class="b" style="left:530px;top:572px;" width="200" height="13" viewBox="530 572 200 13"><path d="M536 575l2 2l-1 5M540 576v6M538.500 579h3" fill="none" stroke="#8d8d8d" stroke-width="1"/><circle cx="537.500" cy="575" r="1.300" fill="#c9c9c9" stroke="#8d8d8d" stroke-width=".5"/><path d="M668 574h7l-3 4v3.500h-1.500v-3.500z" fill="#e1e1e1" stroke="#8f8f8f" stroke-width=".7" stroke-linejoin="round"/><path d="M667 582.500l2-2" stroke="#8f8f8f" stroke-width=".8"/><rect x="697.500" y="573.500" width="8.500" height="9" rx="1" fill="#f0f0f0" stroke="#555" stroke-width=".9"/><rect x="697.500" y="573.500" width="8.500" height="2.500" fill="#555"/><path d="M700 577v5" stroke="#8d8d8d" stroke-width=".7"/><rect x="712.500" y="574" width="7" height="7.500" fill="#cfcfcf" stroke="#9a9a9a" stroke-width=".6"/><path d="M714 576h4M714 578h4" stroke="#8a8a8a" stroke-width=".7"/></svg>
<svg class="b" style="left:936px;top:571.3px;" width="110" height="13" viewBox="936 572 110 13"><rect x="938" y="572" width="62" height="13" fill="#f1f1f1"/><path d="M953.500 572v13M968 572v13M984 572v13M1000 572v13" stroke="#dcdcdc" stroke-width=".7"/><circle cx="944" cy="576" r="1.500" fill="#f5c431"/><circle cx="948" cy="576" r="1.500" fill="#f0a22a"/><path d="M943 577.500h6l-1 2h-4z" fill="#d8d8d8" stroke="#888" stroke-width=".4"/><path d="M946.500 578.500v5l1.200-1l.9 1.700l.8-.4l-.9-1.700h1.500z" fill="#fff" stroke="#333" stroke-width=".5"/><path d="M957 580l3-4l3.500 2v3h-6.500z" fill="#dbe9f8" stroke="#2a62b8" stroke-width=".8"/><path d="M956.500 582.500h6" stroke="#2a62b8" stroke-width=".8"/><path d="M962 574.500l3 3M965 574.500l-3 3" stroke="#d42a20" stroke-width="1"/><path d="M961 579.500v4.200l1-.8l.8 1.400" fill="#fff" stroke="#333" stroke-width=".5"/><circle cx="975" cy="575.500" r="1.800" fill="#f0a22a"/><path d="M972 578h6.500l1 3h-8.500z" fill="#f5c79a" stroke="#c07a2a" stroke-width=".5"/><path d="M976 578.500v5l1.200-1l.9 1.700l.8-.4l-.9-1.700h1.500z" fill="#fff" stroke="#333" stroke-width=".5"/><path d="M989.500 576l4-1.500v8l-4 1.500z" fill="#cfe0f5" stroke="#2a62b8" stroke-width=".9"/><path d="M993 574.300l3 3M996 574.300l-3 3" stroke="#d42a20" stroke-width="1"/><path d="M993.500 579.500v4l1-.8l.8 1.400" fill="#fff" stroke="#333" stroke-width=".5"/><path d="M1001 575.500h5M1003.500 573v5" stroke="#222" stroke-width=".9"/><path d="M1005 577v6l1.500-1.300l1.100 2.100l1-.5l-1.100-2.100h1.900z" fill="#fff" stroke="#222" stroke-width=".7" stroke-linejoin="round"/><circle cx="1018.200" cy="578.500" r="2.700" fill="none" stroke="#b9b9b9" stroke-width="1.700" stroke-dasharray="1.400 .7"/><circle cx="1018.200" cy="578.500" r="2.600" fill="none" stroke="#b5b5b5" stroke-width=".8"/><path d="M1027 574.500h8.500l-3.300 4.300v3.700l-1.900.8v-4.500z" fill="#e6e6e6" stroke="#666" stroke-width=".8" stroke-linejoin="round"/></svg>
<!-- dynamo window -->
<div class="b" style="left:3px;top:82.5px;width:707.3px;height:427px;background:#fff;box-shadow:0 1px 5px rgba(0,0,0,.45);border:.7px solid #8e8e8e"></div>
<div class="b" style="left:3.7px;top:83.2px;width:706px;height:17.3px;background:#fff;"></div>
<svg class="b" style="left:10px;top:87px;" width="7" height="9.5" viewBox="0 0 7 9.5"><path d="M.5 .5h3.400c1.700 0 2.700.9 2.700 2.400c0 1.100-.6 1.900-1.600 2.200l2 3.600h-1.900l-1.700-3.300h-1.100v3.300h-1.800z" fill="#1b6ec2"/><path d="M2.300 2v2.100h1.400c.7 0 1.100-.4 1.100-1c0-.7-.4-1.100-1.100-1.100z" fill="#fff"/></svg>
<div class="t " style="left:20.3px;top:87.22px;font-size:7.3px;line-height:8.76px;color:#9a9a9a;">Dynamo</div>
<svg class="b" style="left:640px;top:84px;" width="70" height="16" viewBox="0 0 70 16"><path d="M4 7.300h5.500" stroke="#9a9a9a" stroke-width=".8"/><rect x="28.300" y="4.500" width="5.600" height="5.600" fill="none" stroke="#777" stroke-width=".8"/><path d="M54 4.300l6 6M60 4.300l-6 6" stroke="#777" stroke-width=".8"/></svg>
<div class="b" style="left:3.7px;top:100.3px;width:706px;height:13.4px;background:#2e2e2e;"></div>
<div class="t " style="left:12.7px;top:103.45px;font-size:6.25px;line-height:7.50px;color:#d8d8d8;">文件</div>
<div class="t " style="left:44.3px;top:103.45px;font-size:6.25px;line-height:7.50px;color:#d8d8d8;">编辑</div>
<div class="t " style="left:75px;top:103.45px;font-size:6.25px;line-height:7.50px;color:#d8d8d8;">视图</div>
<div class="t " style="left:106px;top:103.45px;font-size:6.25px;line-height:7.50px;color:#d8d8d8;">软件包</div>
<div class="t " style="left:143.3px;top:103.45px;font-size:6.25px;line-height:7.50px;color:#d8d8d8;">设置</div>
<div class="t " style="left:174.3px;top:103.45px;font-size:6.25px;line-height:7.50px;color:#d8d8d8;">帮助</div>
<svg class="b" style="left:203.5px;top:102.2px;" width="20" height="9.6" viewBox="0 0 20 9.6"><circle cx="4.800" cy="4.800" r="4.300" fill="#f4f4f4"/><rect x="4.200" y="2" width="1.300" height="3.600" fill="#222"/><rect x="4.200" y="6.300" width="1.300" height="1.300" fill="#222"/><circle cx="14.300" cy="4.800" r="4.300" fill="#7fd08a"/><circle cx="14.300" cy="4.800" r="3.200" fill="#5fc071"/></svg>
<div class="b" style="left:3.7px;top:113.7px;width:706px;height:19px;background:#3a3a3a;"></div>
<svg class="b" style="left:12px;top:118px;" width="102" height="11" viewBox="0 0 102 11"><path d="M1 .5h5l3 3v7h-8z" fill="#b9b9b9"/><path d="M6 .5v3h3z" fill="#8a8a8a"/><path d="M23.500 4.500h3v-2.500h5v2.500h1.500l-1 6h-8.500z" fill="#b9b9b9"/><path d="M26 2.500h6.500v1.200h-6.500z" fill="#8c8c8c"/><path d="M23 6h10.500v1h-10.500z" fill="#8c8c8c"/><path d="M46.500 .8h9v9.700h-9z" fill="none" stroke="#b9b9b9" stroke-width="1.400"/><path d="M48.500 .8h5v3h-5zM46.500 5.800h9" fill="none" stroke="#b9b9b9" stroke-width="1.200"/><path d="M69 4.200l4.200-3.400v2.200c3.600 0 6.200 2.400 6.600 6.400c-1.400-2.400-3.600-3.400-6.600-3.300v2z" fill="#b9b9b9"/><path d="M102 4.200l-4.200-3.400v2.200c-3.600 0-6.200 2.400-6.600 6.400c1.400-2.400 3.600-3.400 6.600-3.300v2z" fill="#595959"/></svg>
<svg class="b" style="left:661px;top:117px;" width="20" height="13" viewBox="0 0 20 13"><path d="M4.200 11.500c-2 0-3.700-1.500-3.700-3.500c0-1.700 1.200-3.100 2.800-3.400c.5-2.300 2.500-4 4.900-4c2.100 0 3.900 1.200 4.600 3.100c2.300.1 4.100 1.800 4.100 4c0 2.100-1.700 3.800-3.800 3.800z" fill="#b6e23e"/><path d="M8 4.200h1.800v2.800h1.700l-2.600 2.900l-2.600-2.900h1.700z" fill="#1d2a0a"/></svg>
<svg class="b" style="left:687.5px;top:118.5px;" width="13" height="9.5" viewBox="0 0 13 9.5"><path d="M.5 2h2.800l1-1.600h4.400l1 1.600h2.800v7h-12z" fill="#8e8e8e"/><circle cx="6.500" cy="5.200" r="2.300" fill="#3a3a3a"/><circle cx="6.500" cy="5.200" r="1.100" fill="#8e8e8e"/></svg>
<div class="b" style="left:3.7px;top:132.7px;width:706px;height:11.6px;background:#1d1d1d;"></div>
<div class="b" style="left:155.5px;top:132.7px;width:141.5px;height:11.6px;background:#2f2f2f;"></div>
<div class="t " style="left:13px;top:134.65px;font-size:6.25px;line-height:7.50px;color:#e8e8e8;">库</div>
<svg class="b" style="left:118px;top:134.5px;" width="36" height="8" viewBox="0 0 36 8"><path d="M1 .5v7M10.500 .5v7M22.300 .5v7" stroke="#4e4e4e" stroke-width=".8"/><path d="M3.500 1.500h5l-1.900 2.300v3l-1.200-.8v-2.200z" fill="#4a4a4a"/><rect x="13" y="3" width="7" height="2.200" fill="#4a4a4a"/><path d="M26 .8v6.500" stroke="#c8c8c8" stroke-width=".9"/><path d="M30.800 1l-3.300 3l3.300 3z" fill="#c8c8c8"/><path d="M33 .8v6.500" stroke="#c8c8c8" stroke-width=".9"/></svg>
<div class="t " style="left:161px;top:134.30px;font-size:7px;line-height:8.40px;color:#f2f2f2;font-weight:bold;letter-spacing:-.1px">pts2topos.dyn*</div>
<svg class="b" style="left:288.5px;top:135.5px;" width="6" height="6" viewBox="0 0 6 6"><path d="M.8 .8l4.400 4.400M5.200 .8l-4.400 4.400" stroke="#8c8c8c" stroke-width=".8"/></svg>
<svg class="b" style="left:701.5px;top:134.5px;" width="7" height="7" viewBox="0 0 7 7"><path d="M0 1h7M0 3.400h7M0 5.800h7" stroke="#7a7a7a" stroke-width="1.200"/></svg>
<div class="b" style="left:3.7px;top:144.3px;width:151.8px;height:338.2px;background:#2b2b2b;"></div>
<div class="b" style="left:154.5px;top:144.3px;width:1.2px;height:338.2px;background:#555;"></div>
<div class="b" style="left:6px;top:146.8px;width:146px;height:16.2px;background:#f6f6f6;border-radius:4px"></div>
<svg class="b" style="left:65.5px;top:151px;" width="7" height="7.5" viewBox="0 0 7 7.5"><circle cx="2.800" cy="2.800" r="2" fill="none" stroke="#222" stroke-width="1.100"/><path d="M4.300 4.400l2.100 2.300" stroke="#222" stroke-width="1.300"/></svg>
<div class="t " style="left:79px;top:150.48px;font-size:7.2px;line-height:8.64px;color:#8a8a8a;">搜索</div>
<div class="b" style="left:5px;top:165.29999999999998px;width:149px;height:0.7px;background:#363636;"></div>
<svg class="b" style="left:8.5px;top:172.6px;" width="4" height="4.5" viewBox="0 0 4 4.5"><path d="M.4 .3l2.800 1.900l-2.800 1.900z" fill="#8f8f8f"/></svg>
<div class="t it" style="left:19.4px;top:171.06px;font-size:7.4px;line-height:8.88px;color:#d6d6d6;">Ampersand</div>
<div class="b" style="left:5px;top:183.83999999999997px;width:149px;height:0.7px;background:#363636;"></div>
<svg class="b" style="left:8.5px;top:191.14px;" width="4" height="4.5" viewBox="0 0 4 4.5"><path d="M.4 .3l2.800 1.900l-2.800 1.900z" fill="#8f8f8f"/></svg>
<div class="t it" style="left:19.4px;top:189.60px;font-size:7.4px;line-height:8.88px;color:#d6d6d6;">Analyze</div>
<div class="b" style="left:5px;top:202.38px;width:149px;height:0.7px;background:#363636;"></div>
<svg class="b" style="left:8.5px;top:209.68px;" width="4" height="4.5" viewBox="0 0 4 4.5"><path d="M.4 .3l2.800 1.900l-2.800 1.900z" fill="#8f8f8f"/></svg>
<div class="t it" style="left:19.4px;top:208.14px;font-size:7.4px;line-height:8.88px;color:#d6d6d6;">Archi-lab_Bumblebee</div>
<div class="b" style="left:5px;top:220.92px;width:149px;height:0.7px;background:#363636;"></div>
<svg class="b" style="left:8.5px;top:228.22px;" width="4" height="4.5" viewBox="0 0 4 4.5"><path d="M.4 .3l2.800 1.900l-2.800 1.900z" fill="#8f8f8f"/></svg>
<div class="t it" style="left:19.4px;top:226.68px;font-size:7.4px;line-height:8.88px;color:#d6d6d6;">Archi-lab_Grimshaw</div>
<div class="b" style="left:5px;top:239.45999999999998px;width:149px;height:0.7px;background:#363636;"></div>
<svg class="b" style="left:8.5px;top:246.76px;" width="4" height="4.5" viewBox="0 0 4 4.5"><path d="M.4 .3l2.800 1.900l-2.800 1.900z" fill="#8f8f8f"/></svg>
<div class="t it" style="left:19.4px;top:245.22px;font-size:7.4px;line-height:8.88px;color:#d6d6d6;">Archi-lab_Mandrill</div>
<div class="b" style="left:5px;top:257.99999999999994px;width:149px;height:0.7px;background:#363636;"></div>
<svg class="b" style="left:8.5px;top:265.29999999999995px;" width="4" height="4.5" viewBox="0 0 4 4.5"><path d="M.4 .3l2.800 1.900l-2.800 1.900z" fill="#8f8f8f"/></svg>
<div class="t it" style="left:19.4px;top:263.76px;font-size:7.4px;line-height:8.88px;color:#d6d6d6;">Archi-lab_MantisShrimp</div>
<div class="b" style="left:5px;top:276.53999999999996px;width:149px;height:0.7px;background:#363636;"></div>
<svg class="b" style="left:8.5px;top:283.84px;" width="4" height="4.5" viewBox="0 0 4 4.5"><path d="M.4 .3l2.800 1.900l-2.800 1.900z" fill="#8f8f8f"/></svg>
<div class="t it" style="left:19.4px;top:282.30px;font-size:7.4px;line-height:8.88px;color:#d6d6d6;">Archive</div>
<div class="b" style="left:5px;top:295.08px;width:149px;height:0.7px;background:#363636;"></div>
<svg class="b" style="left:8.5px;top:302.38px;" width="4" height="4.5" viewBox="0 0 4 4.5"><path d="M.4 .3l2.800 1.900l-2.800 1.900z" fill="#8f8f8f"/></svg>
<div class="t it" style="left:19.4px;top:300.84px;font-size:7.4px;line-height:8.88px;color:#d6d6d6;">Bakery</div>
<div class="b" style="left:5px;top:313.61999999999995px;width:149px;height:0.7px;background:#363636;"></div>
<svg class="b" style="left:8.5px;top:320.91999999999996px;" width="4" height="4.5" viewBox="0 0 4 4.5"><path d="M.4 .3l2.800 1.900l-2.800 1.900z" fill="#8f8f8f"/></svg>
<div class="t it" style="left:19.4px;top:319.38px;font-size:7.4px;line-height:8.88px;color:#d6d6d6;">BecauseWeDynamo</div>
<div class="b" style="left:5px;top:332.15999999999997px;width:149px;height:0.7px;background:#363636;"></div>
<svg class="b" style="left:8.5px;top:339.46px;" width="4" height="4.5" viewBox="0 0 4 4.5"><path d="M.4 .3l2.800 1.900l-2.800 1.900z" fill="#8f8f8f"/></svg>
<div class="t it" style="left:19.4px;top:337.92px;font-size:7.4px;line-height:8.88px;color:#d6d6d6;">BIM4Struc</div>
<div class="b" style="left:5px;top:350.7px;width:149px;height:0.7px;background:#363636;"></div>
<svg class="b" style="left:8.5px;top:358.0px;" width="4" height="4.5" viewBox="0 0 4 4.5"><path d="M.4 .3l2.800 1.900l-2.800 1.900z" fill="#8f8f8f"/></svg>
<div class="t it" style="left:19.4px;top:356.46px;font-size:7.4px;line-height:8.88px;color:#d6d6d6;">BimorphNodes</div>
<div class="b" style="left:5px;top:369.23999999999995px;width:149px;height:0.7px;background:#363636;"></div>
<svg class="b" style="left:8.5px;top:376.53999999999996px;" width="4" height="4.5" viewBox="0 0 4 4.5"><path d="M.4 .3l2.800 1.900l-2.800 1.900z" fill="#8f8f8f"/></svg>
<div class="t it" style="left:19.4px;top:375.00px;font-size:7.4px;line-height:8.88px;color:#d6d6d6;">Bridge</div>
<div class="b" style="left:5px;top:387.78px;width:149px;height:0.7px;background:#363636;"></div>
<svg class="b" style="left:8.5px;top:395.08px;" width="4" height="4.5" viewBox="0 0 4 4.5"><path d="M.4 .3l2.800 1.900l-2.800 1.900z" fill="#8f8f8f"/></svg>
<div class="t it" style="left:19.4px;top:393.54px;font-size:7.4px;line-height:8.88px;color:#d6d6d6;">BuiltIn</div>
<div class="b" style="left:5px;top:406.32px;width:149px;height:0.7px;background:#363636;"></div>
<svg class="b" style="left:8.5px;top:413.62px;" width="4" height="4.5" viewBox="0 0 4 4.5"><path d="M.4 .3l2.800 1.900l-2.800 1.900z" fill="#8f8f8f"/></svg>
<div class="t it" style="left:19.4px;top:412.08px;font-size:7.4px;line-height:8.88px;color:#d6d6d6;">Clockwork</div>
<div class="b" style="left:5px;top:424.85999999999996px;width:149px;height:0.7px;background:#363636;"></div>
<svg class="b" style="left:8.5px;top:432.15999999999997px;" width="4" height="4.5" viewBox="0 0 4 4.5"><path d="M.4 .3l2.800 1.900l-2.800 1.900z" fill="#8f8f8f"/></svg>
<div class="t it" style="left:19.4px;top:430.62px;font-size:7.4px;line-height:8.88px;color:#d6d6d6;">Core</div>
<div class="b" style="left:5px;top:443.3999999999999px;width:149px;height:0.7px;background:#363636;"></div>
<svg class="b" style="left:8.5px;top:450.69999999999993px;" width="4" height="4.5" viewBox="0 0 4 4.5"><path d="M.4 .3l2.800 1.900l-2.800 1.900z" fill="#8f8f8f"/></svg>
<div class="t it" style="left:19.4px;top:449.16px;font-size:7.4px;line-height:8.88px;color:#d6d6d6;">CrackerJack</div>
<div class="b" style="left:5px;top:461.94px;width:149px;height:0.7px;background:#363636;"></div>
<svg class="b" style="left:8.5px;top:469.24px;" width="4" height="4.5" viewBox="0 0 4 4.5"><path d="M.4 .3l2.800 1.900l-2.800 1.900z" fill="#8f8f8f"/></svg>
<div class="t it" style="left:19.4px;top:467.70px;font-size:7.4px;line-height:8.88px;color:#d6d6d6;">Display</div>
<div class="b" style="left:3.7px;top:482.5px;width:706px;height:27px;background:linear-gradient(#262626,#161616 60%,#0c0c0c);"></div>
<div class="b" style="left:6px;top:486px;width:67px;height:21px;background:#2c2c2c;border:.7px solid #444"></div>
<div class="t " style="left:10.5px;top:491.92px;font-size:7.3px;line-height:8.76px;color:#e4e4e4;">手动</div>
<svg class="b" style="left:62px;top:494.8px;" width="6" height="4" viewBox="0 0 6 4"><path d="M.3 .4h5.200l-2.600 2.900z" fill="#cfcfcf"/></svg>
<div class="b" style="left:75px;top:486px;width:56px;height:21px;background:#3b3b3b;border:.7px solid #454545"></div>
<div class="t c " style="left:3px;width:200px;top:491.92px;font-size:7.3px;line-height:8.76px;color:#d0d0d0;">运行</div>
<div class="t " style="left:189.5px;top:492.57px;font-size:6.55px;line-height:7.86px;color:#eaa324;font-weight:bold;transform:skewX(-12deg);transform-origin:left center">运行已完成，但出现警告。</div>
<svg class="b" style="left:702px;top:501px;" width="7" height="7" viewBox="0 0 7 7"><path d="M6.500 1v5.500h-5.500z" fill="none"/><path d="M6 2v.1M6 4v.1M4 4v.1M6 6v.1M4 6v.1M2 6v.1" stroke="#8a8a8a" stroke-width="1.100" stroke-linecap="square"/></svg>
<!-- dynamo canvas -->
<svg class="b" style="left:155.7px;top:144.3px" width="554" height="338.2" viewBox="155.7 144.3 554 338.2"><rect x="155.7" y="144.3" width="554" height="338.2" fill="#f9f9f9"/><path d="M155.7 256C162 256 165 255.500 170 255.500" fill="none" stroke="#8a8a8a" stroke-width=".9"/><path d="M155.7 280.500C182 280 184 262.500 203 262.500" fill="none" stroke="#8a8a8a" stroke-width=".9"/><path d="M189 255.500C196 255.500 196 258.500 203 258.500" fill="none" stroke="#8a8a8a" stroke-width=".9"/><path d="M244 258.500C253 258.500 252 254 261 254" fill="none" stroke="#8a8a8a" stroke-width=".9"/><path d="M288 258C298 258 297 260.500 307 260.500" fill="none" stroke="#8a8a8a" stroke-width=".9"/><path d="M337 260.500C347 260.500 346 255 356 255" fill="none" stroke="#8a8a8a" stroke-width=".9"/><path d="M384 260C398 260 396 249 410 249" fill="none" stroke="#8a8a8a" stroke-width=".9"/><path d="M520 249.300H531" fill="none" stroke="#8a8a8a" stroke-width=".9"/><path d="M560 249C569 249 569 252 578 252" fill="none" stroke="#8a8a8a" stroke-width=".9"/><path d="M559 266.500C570 266.500 567 257 578 257" fill="none" stroke="#8a8a8a" stroke-width=".9"/><path d="M616 252C627 252 627 249.500 638 249.500" fill="none" stroke="#8a8a8a" stroke-width=".9"/><path d="M659 380C663 380 662 384 665.500 384" fill="none" stroke="#8a8a8a" stroke-width=".9"/><path d="M659 382C663 382 662 386.500 665.500 386.500" fill="none" stroke="#8a8a8a" stroke-width=".9"/><path d="M659 384C663 384 662 389 665.500 389" fill="none" stroke="#8a8a8a" stroke-width=".9"/><path d="M645 427C636 427 638 410 650 398C657 391 660 388 665.500 388" fill="none" stroke="#8a8a8a" stroke-width=".9"/><path d="M645 447C634 447 635 432 642 420C650 405 658 396 665.500 391.500" fill="none" stroke="#8a8a8a" stroke-width=".9"/><path d="M693.300 383C700 383 700 392 706.700 392" fill="none" stroke="#8a8a8a" stroke-width=".9"/><path d="M703 412C706 412 704 398 706.700 398" fill="none" stroke="#8a8a8a" stroke-width=".9"/><path d="M609.300 474C620 474 621 479 632 479" fill="none" stroke="#8a8a8a" stroke-width=".9"/><path d="M676 479C690 479 696 475 709.700 475" fill="none" stroke="#8a8a8a" stroke-width=".9"/><rect x="170" y="248" width="19.0" height="13.5" fill="#d3ccc7"/><rect x="170" y="248" width="19.0" height="4.3" fill="#4f4f4f"/><rect x="170.3" y="252.9" width="9.9" height="3.600" fill="#e9e5e2"/><rect x="185.2" y="252.9" width="3.5" height="3.600" fill="#e9e5e2"/><rect x="203" y="251" width="41.0" height="23.0" fill="#d3ccc7"/><rect x="203" y="251" width="41.0" height="4.5" fill="#4f4f4f"/><rect x="203.3" y="256.1" width="21.3" height="3.600" fill="#e9e5e2"/><rect x="235.800" y="256.1" width="7.9" height="3.600" fill="#e9e5e2"/><rect x="203.500" y="256.7" width="20.500" height="2.600" fill="#e9e5e2"/><rect x="219.500" y="257.4" width="1.400" height="1.300" fill="#333"/><rect x="203.500" y="260.2" width="20.500" height="2.600" fill="#e9e5e2"/><rect x="219.500" y="260.9" width="1.400" height="1.300" fill="#333"/><rect x="203.500" y="263.7" width="20.500" height="2.600" fill="#e9e5e2"/><rect x="219.500" y="264.4" width="1.400" height="1.300" fill="#333"/><rect x="261" y="247" width="27.0" height="18.0" fill="#d3ccc7"/><rect x="261" y="247" width="27.0" height="5.0" fill="#4f4f4f"/><rect x="261.3" y="252.6" width="14.0" height="3.600" fill="#e9e5e2"/><rect x="282.6" y="252.6" width="5.100" height="3.600" fill="#e9e5e2"/><rect x="307" y="252.5" width="30.0" height="14.0" fill="#d3ccc7"/><rect x="307" y="252.5" width="30.0" height="4.5" fill="#4f4f4f"/><rect x="307.3" y="257.6" width="15.600" height="3.600" fill="#e9e5e2"/><rect x="331.0" y="257.6" width="5.7" height="3.600" fill="#e9e5e2"/><rect x="356" y="248" width="28.0" height="18.0" fill="#d3ccc7"/><rect x="356" y="248" width="28.0" height="4.5" fill="#4f4f4f"/><rect x="356.3" y="253.1" width="14.6" height="3.600" fill="#e9e5e2"/><rect x="378.4" y="253.1" width="5.3" height="3.600" fill="#e9e5e2"/><rect x="410" y="242.5" width="110.0" height="13.0" fill="#d3ccc7"/><rect x="410" y="242.5" width="110.0" height="4.3" fill="#4f4f4f"/><rect x="411.500" y="248.200" width="104" height="3" fill="#e9e5e2"/><rect x="416" y="249.300" width="92" height=".8" fill="#9c9793"/><rect x="531" y="241" width="29.0" height="14.0" fill="#d3ccc7"/><rect x="531" y="241" width="29.0" height="5.0" fill="#4f4f4f"/><rect x="531.3" y="246.6" width="15.100" height="3.600" fill="#e9e5e2"/><rect x="554.2" y="246.6" width="5.5" height="3.600" fill="#e9e5e2"/><rect x="544.5" y="259" width="14.5" height="14.0" fill="#d3ccc7"/><rect x="544.5" y="259" width="14.5" height="5.0" fill="#4f4f4f"/><rect x="545.300" y="265" width="8" height="2.200" fill="#f2f2f2" stroke="#7a86b8" stroke-width=".4"/><rect x="578" y="244" width="38.0" height="18.5" fill="#d3ccc7"/><rect x="578" y="244" width="38.0" height="5.0" fill="#4f4f4f"/><rect x="578.3" y="249.6" width="19.8" height="3.600" fill="#e9e5e2"/><rect x="608.4" y="249.6" width="7.3" height="3.600" fill="#e9e5e2"/><rect x="638" y="243" width="41.0" height="13.0" fill="#d3ccc7"/><rect x="638" y="243" width="41.0" height="4.5" fill="#4f4f4f"/><rect x="638.3" y="248.1" width="21.3" height="3.4" fill="#e9e5e2"/><rect x="670.8" y="248.1" width="7.9" height="3.4" fill="#e9e5e2"/><rect x="203" y="274.3" width="42.0" height="50.2" fill="#fff" stroke="#e6e6e6" stroke-width=".5"/><rect x="209.0" y="276.7" width="3.200" height="1.300" fill="#a9a9a9"/><rect x="213.5" y="276.9" width="4" height=".9" fill="#cdcdcd"/><rect x="211.0" y="279.9" width="3.200" height="1.300" fill="#a9a9a9"/><rect x="215.5" y="280.1" width="6" height=".9" fill="#cdcdcd"/><rect x="211.0" y="283.2" width="3.200" height="1.300" fill="#a9a9a9"/><rect x="215.5" y="283.4" width="8" height=".9" fill="#cdcdcd"/><rect x="211.0" y="286.4" width="3.200" height="1.300" fill="#a9a9a9"/><rect x="215.5" y="286.6" width="10" height=".9" fill="#cdcdcd"/><rect x="211.0" y="289.7" width="3.200" height="1.300" fill="#a9a9a9"/><rect x="215.5" y="289.9" width="5" height=".9" fill="#cdcdcd"/><rect x="211.0" y="292.9" width="3.200" height="1.300" fill="#a9a9a9"/><rect x="215.5" y="293.1" width="7" height=".9" fill="#cdcdcd"/><rect x="211.0" y="296.2" width="3.200" height="1.300" fill="#a9a9a9"/><rect x="215.5" y="296.4" width="9" height=".9" fill="#cdcdcd"/><rect x="209.0" y="299.4" width="3.200" height="1.300" fill="#a9a9a9"/><rect x="213.5" y="299.6" width="4" height=".9" fill="#cdcdcd"/><rect x="211.0" y="302.7" width="3.200" height="1.300" fill="#a9a9a9"/><rect x="215.5" y="302.9" width="6" height=".9" fill="#cdcdcd"/><rect x="211.0" y="305.9" width="3.200" height="1.300" fill="#a9a9a9"/><rect x="215.5" y="306.1" width="8" height=".9" fill="#cdcdcd"/><rect x="211.0" y="309.2" width="3.200" height="1.300" fill="#a9a9a9"/><rect x="215.5" y="309.4" width="10" height=".9" fill="#cdcdcd"/><rect x="211.0" y="312.4" width="3.200" height="1.300" fill="#a9a9a9"/><rect x="215.5" y="312.6" width="5" height=".9" fill="#cdcdcd"/><rect x="211.0" y="315.7" width="3.200" height="1.300" fill="#a9a9a9"/><rect x="215.5" y="315.9" width="7" height=".9" fill="#cdcdcd"/><rect x="211.0" y="318.9" width="3.200" height="1.300" fill="#a9a9a9"/><rect x="215.5" y="319.1" width="9" height=".9" fill="#cdcdcd"/><rect x="204.500" y="322.3" width="5" height=".8" fill="#9f9f9f"/><rect x="240.5" y="322.3" width="3" height=".8" fill="#9f9f9f"/><rect x="259" y="266.5" width="32.0" height="50.0" fill="#fff" stroke="#e6e6e6" stroke-width=".5"/><rect x="264.0" y="268.9" width="3.200" height="1.300" fill="#a9a9a9"/><rect x="268.5" y="269.1" width="4" height=".9" fill="#cdcdcd"/><rect x="266.0" y="271.9" width="3.200" height="1.300" fill="#a9a9a9"/><rect x="270.5" y="272.1" width="6" height=".9" fill="#cdcdcd"/><rect x="266.0" y="274.9" width="3.200" height="1.300" fill="#a9a9a9"/><rect x="270.5" y="275.1" width="8" height=".9" fill="#cdcdcd"/><rect x="266.0" y="277.9" width="3.200" height="1.300" fill="#a9a9a9"/><rect x="270.5" y="278.1" width="10" height=".9" fill="#cdcdcd"/><rect x="266.0" y="280.9" width="3.200" height="1.300" fill="#a9a9a9"/><rect x="270.5" y="281.1" width="5" height=".9" fill="#cdcdcd"/><rect x="266.0" y="283.9" width="3.200" height="1.300" fill="#a9a9a9"/><rect x="270.5" y="284.1" width="7" height=".9" fill="#cdcdcd"/><rect x="266.0" y="286.9" width="3.200" height="1.300" fill="#a9a9a9"/><rect x="270.5" y="287.1" width="9" height=".9" fill="#cdcdcd"/><rect x="264.0" y="289.9" width="3.200" height="1.300" fill="#a9a9a9"/><rect x="268.5" y="290.1" width="4" height=".9" fill="#cdcdcd"/><rect x="266.0" y="292.9" width="3.200" height="1.300" fill="#a9a9a9"/><rect x="270.5" y="293.1" width="6" height=".9" fill="#cdcdcd"/><rect x="266.0" y="295.9" width="3.200" height="1.300" fill="#a9a9a9"/><rect x="270.5" y="296.1" width="8" height=".9" fill="#cdcdcd"/><rect x="266.0" y="298.9" width="3.200" height="1.300" fill="#a9a9a9"/><rect x="270.5" y="299.1" width="10" height=".9" fill="#cdcdcd"/><rect x="266.0" y="301.9" width="3.200" height="1.300" fill="#a9a9a9"/><rect x="270.5" y="302.1" width="5" height=".9" fill="#cdcdcd"/><rect x="266.0" y="304.9" width="3.200" height="1.300" fill="#a9a9a9"/><rect x="270.5" y="305.1" width="7" height=".9" fill="#cdcdcd"/><rect x="266.0" y="307.9" width="3.200" height="1.300" fill="#a9a9a9"/><rect x="270.5" y="308.1" width="9" height=".9" fill="#cdcdcd"/><rect x="264.0" y="310.9" width="3.200" height="1.300" fill="#a9a9a9"/><rect x="268.5" y="311.1" width="4" height=".9" fill="#cdcdcd"/><rect x="260.5" y="314.3" width="5" height=".8" fill="#9f9f9f"/><rect x="286.500" y="314.3" width="3" height=".8" fill="#9f9f9f"/><rect x="307" y="268" width="31.0" height="49.0" fill="#fff" stroke="#e6e6e6" stroke-width=".5"/><rect x="311.0" y="270.4" width="3.200" height="1.300" fill="#a9a9a9"/><rect x="315.5" y="270.6" width="4" height=".9" fill="#cdcdcd"/><rect x="313.0" y="273.6" width="3.200" height="1.300" fill="#a9a9a9"/><rect x="317.5" y="273.8" width="6" height=".9" fill="#cdcdcd"/><rect x="313.0" y="276.7" width="3.200" height="1.300" fill="#a9a9a9"/><rect x="317.5" y="276.9" width="8" height=".9" fill="#cdcdcd"/><rect x="313.0" y="279.9" width="3.200" height="1.300" fill="#a9a9a9"/><rect x="317.5" y="280.1" width="10" height=".9" fill="#cdcdcd"/><rect x="313.0" y="283.0" width="3.200" height="1.300" fill="#a9a9a9"/><rect x="317.5" y="283.2" width="5" height=".9" fill="#cdcdcd"/><rect x="313.0" y="286.2" width="3.200" height="1.300" fill="#a9a9a9"/><rect x="317.5" y="286.4" width="7" height=".9" fill="#cdcdcd"/><rect x="313.0" y="289.3" width="3.200" height="1.300" fill="#a9a9a9"/><rect x="317.5" y="289.5" width="9" height=".9" fill="#cdcdcd"/><rect x="311.0" y="292.5" width="3.200" height="1.300" fill="#a9a9a9"/><rect x="315.5" y="292.7" width="4" height=".9" fill="#cdcdcd"/><rect x="313.0" y="295.6" width="3.200" height="1.300" fill="#a9a9a9"/><rect x="317.5" y="295.800" width="6" height=".9" fill="#cdcdcd"/><rect x="313.0" y="298.8" width="3.200" height="1.300" fill="#a9a9a9"/><rect x="317.5" y="299.0" width="8" height=".9" fill="#cdcdcd"/><rect x="313.0" y="301.9" width="3.200" height="1.300" fill="#a9a9a9"/><rect x="317.5" y="302.1" width="10" height=".9" fill="#cdcdcd"/><rect x="313.0" y="305.1" width="3.200" height="1.300" fill="#a9a9a9"/><rect x="317.5" y="305.3" width="5" height=".9" fill="#cdcdcd"/><rect x="313.0" y="308.2" width="3.200" height="1.300" fill="#a9a9a9"/><rect x="317.5" y="308.4" width="7" height=".9" fill="#cdcdcd"/><rect x="313.0" y="311.4" width="3.200" height="1.300" fill="#a9a9a9"/><rect x="317.5" y="311.6" width="9" height=".9" fill="#cdcdcd"/><rect x="308.5" y="314.8" width="5" height=".8" fill="#9f9f9f"/><rect x="333.5" y="314.8" width="3" height=".8" fill="#9f9f9f"/><rect x="356" y="268" width="30.0" height="49.0" fill="#fff" stroke="#e6e6e6" stroke-width=".5"/><rect x="360.0" y="270.4" width="3.200" height="1.300" fill="#a9a9a9"/><rect x="364.5" y="270.6" width="4" height=".9" fill="#cdcdcd"/><rect x="362.0" y="273.6" width="3.200" height="1.300" fill="#a9a9a9"/><rect x="366.500" y="273.8" width="6" height=".9" fill="#cdcdcd"/><rect x="362.0" y="276.7" width="3.200" height="1.300" fill="#a9a9a9"/><rect x="366.500" y="276.9" width="8" height=".9" fill="#cdcdcd"/><rect x="362.0" y="279.9" width="3.200" height="1.300" fill="#a9a9a9"/><rect x="366.500" y="280.1" width="10" height=".9" fill="#cdcdcd"/><rect x="362.0" y="283.0" width="3.200" height="1.300" fill="#a9a9a9"/><rect x="366.500" y="283.2" width="5" height=".9" fill="#cdcdcd"/><rect x="362.0" y="286.2" width="3.200" height="1.300" fill="#a9a9a9"/><rect x="366.500" y="286.4" width="7" height=".9" fill="#cdcdcd"/><rect x="362.0" y="289.3" width="3.200" height="1.300" fill="#a9a9a9"/><rect x="366.500" y="289.5" width="9" height=".9" fill="#cdcdcd"/><rect x="360.0" y="292.5" width="3.200" height="1.300" fill="#a9a9a9"/><rect x="364.5" y="292.7" width="4" height=".9" fill="#cdcdcd"/><rect x="362.0" y="295.6" width="3.200" height="1.300" fill="#a9a9a9"/><rect x="366.500" y="295.800" width="6" height=".9" fill="#cdcdcd"/><rect x="362.0" y="298.8" width="3.200" height="1.300" fill="#a9a9a9"/><rect x="366.500" y="299.0" width="8" height=".9" fill="#cdcdcd"/><rect x="362.0" y="301.9" width="3.200" height="1.300" fill="#a9a9a9"/><rect x="366.500" y="302.1" width="10" height=".9" fill="#cdcdcd"/><rect x="362.0" y="305.1" width="3.200" height="1.300" fill="#a9a9a9"/><rect x="366.500" y="305.3" width="5" height=".9" fill="#cdcdcd"/><rect x="362.0" y="308.2" width="3.200" height="1.300" fill="#a9a9a9"/><rect x="366.500" y="308.4" width="7" height=".9" fill="#cdcdcd"/><rect x="362.0" y="311.4" width="3.200" height="1.300" fill="#a9a9a9"/><rect x="366.500" y="311.6" width="9" height=".9" fill="#cdcdcd"/><rect x="357.5" y="314.8" width="5" height=".8" fill="#9f9f9f"/><rect x="381.5" y="314.8" width="3" height=".8" fill="#9f9f9f"/><rect x="637" y="258" width="43.0" height="31.0" fill="#fff" stroke="#e6e6e6" stroke-width=".5"/><rect x="640.0" y="260.4" width="3" height="1.300" fill="#b5b5b5"/><rect x="645.0" y="260.6" width="11" height=".9" fill="#cfcfcf"/><rect x="667.0" y="259.7" width="8" height="2.700" fill="#b9e6b0"/><rect x="640.0" y="265.0" width="3" height="1.300" fill="#b5b5b5"/><rect x="645.0" y="265.2" width="11" height=".9" fill="#cfcfcf"/><rect x="667.0" y="264.3" width="8" height="2.700" fill="#b9e6b0"/><rect x="640.0" y="269.6" width="3" height="1.300" fill="#b5b5b5"/><rect x="645.0" y="269.8" width="11" height=".9" fill="#cfcfcf"/><rect x="667.0" y="268.9" width="8" height="2.700" fill="#b9e6b0"/><rect x="640.0" y="274.2" width="3" height="1.300" fill="#b5b5b5"/><rect x="645.0" y="274.4" width="11" height=".9" fill="#cfcfcf"/><rect x="667.0" y="273.5" width="8" height="2.700" fill="#b9e6b0"/><rect x="640.0" y="278.8" width="3" height="1.300" fill="#b5b5b5"/><rect x="645.0" y="279.0" width="11" height=".9" fill="#cfcfcf"/><rect x="667.0" y="278.1" width="8" height="2.700" fill="#b9e6b0"/><rect x="640.0" y="283.4" width="3" height="1.300" fill="#b5b5b5"/><rect x="645.0" y="283.6" width="11" height=".9" fill="#cfcfcf"/><rect x="667.0" y="282.7" width="8" height="2.700" fill="#b9e6b0"/><rect x="638.5" y="286.800" width="5" height=".8" fill="#9f9f9f"/><rect x="675.5" y="286.800" width="3" height=".8" fill="#9f9f9f"/><rect x="638.6" y="370.6" width="20.6" height="18.7" fill="#f8dc93"/><rect x="638.6" y="370.6" width="20.6" height="5.0" fill="#4c4236"/><path d="M645 379.500q2-1.200 4 0t4 0" fill="none" stroke="#6b6250" stroke-width=".5"/><path d="M645 381.500q2-1.200 4 0t4 0" fill="none" stroke="#6b6250" stroke-width=".5"/><path d="M645 383.500q2-1.200 4 0t4 0" fill="none" stroke="#6b6250" stroke-width=".5"/><path d="M645 385.500q2-1.200 4 0t4 0" fill="none" stroke="#6b6250" stroke-width=".5"/><rect x="665.5" y="375.6" width="27.8" height="22.8" fill="#b9c3c1"/><rect x="665.5" y="375.6" width="27.8" height="4.4" fill="#8096a4"/><rect x="665.8" y="380.6" width="14.5" height="3.600" fill="#d5dbd9"/><rect x="687.7" y="380.6" width="5.3" height="3.600" fill="#d5dbd9"/><rect x="706.7" y="386.500" width="3.0" height="18.0" fill="#f8dc93"/><rect x="706.7" y="386.500" width="3.0" height="3.800" fill="#4c4236"/><rect x="689.4" y="405" width="13.600" height="14.0" fill="#d3ccc7"/><rect x="689.4" y="405" width="13.600" height="4.7" fill="#4f4f4f"/><rect x="690.300" y="411" width="6" height="2.200" fill="#f2f2f2" stroke="#7a86b8" stroke-width=".4"/><rect x="645" y="419.5" width="27.7" height="14.1" fill="#f8dc93"/><rect x="645" y="419.5" width="27.7" height="5.0" fill="#4c4236"/><rect x="645" y="425" width="27.700" height="3.200" fill="#fbe6ad"/><rect x="657.500" y="426" width="1.300" height="1.300" fill="#333"/><rect x="645" y="440" width="27.7" height="13.800" fill="#f8dc93"/><rect x="645" y="440" width="27.7" height="5.0" fill="#4c4236"/><rect x="645" y="445.500" width="27.700" height="3.200" fill="#fbe6ad"/><rect x="658" y="446.500" width="1.300" height="1.300" fill="#333"/><rect x="644" y="458.800" width="30" height=".8" fill="#e2e2e2"/><rect x="594.5" y="467.2" width="14.8" height="15.3" fill="#d3ccc7"/><rect x="594.5" y="467.2" width="14.8" height="5.0" fill="#4f4f4f"/><rect x="600" y="473.500" width="9" height="3" fill="#e9e5e2"/><rect x="632" y="472.2" width="44.0" height="10.3" fill="#d3ccc7"/><rect x="632" y="472.2" width="44.0" height="4.3" fill="#4f4f4f"/><rect x="632.500" y="477.300" width="43" height="3" fill="#e9e5e2"/><rect x="648" y="477.300" width="6" height="5.200" fill="#d3ccc7"/><circle cx="647" cy="367.3" r="1.300" fill="#f1c84a"/><circle cx="647" cy="367.3" r=".5" fill="#3a3218"/><circle cx="679" cy="372.2" r="1.300" fill="#f1c84a"/><circle cx="679" cy="372.2" r=".5" fill="#3a3218"/><circle cx="658.5" cy="416.3" r="1.300" fill="#f1c84a"/><circle cx="658.5" cy="416.3" r=".5" fill="#3a3218"/><rect x="182.4" y="254.3" width="1.300" height="1.300" fill="#333"/><rect x="273.9" y="254.3" width="1.300" height="1.300" fill="#333"/><rect x="321.4" y="259.1" width="1.300" height="1.300" fill="#333"/><rect x="369.4" y="254.60000000000002" width="1.300" height="1.300" fill="#333"/><rect x="544.9" y="248.3" width="1.300" height="1.300" fill="#333"/><rect x="596.4" y="251.5" width="1.300" height="1.300" fill="#333"/><rect x="596.4" y="254.8" width="1.300" height="1.300" fill="#333"/><rect x="657.9" y="249.8" width="1.300" height="1.300" fill="#333"/><g fill="#050505"><circle cx="491.9" cy="151.5" r="1.750"/><circle cx="491.2" cy="154.6" r="1.750"/><circle cx="490.6" cy="157.7" r="1.750"/><circle cx="489.4" cy="164.6" r="1.750"/><circle cx="488.5" cy="169.6" r="1.750"/><circle cx="485.6" cy="173.4" r="1.750"/><circle cx="485.0" cy="176.5" r="1.750"/><circle cx="484.6" cy="179.6" r="1.750"/><circle cx="483.7" cy="185.6" r="1.750"/><circle cx="482.2" cy="193.6" r="1.750"/><circle cx="455.4" cy="167.7" r="1.750"/><circle cx="455.2" cy="170.8" r="1.750"/><circle cx="455.1" cy="174.0" r="1.750"/><circle cx="454.9" cy="177.1" r="1.750"/><circle cx="454.8" cy="180.3" r="1.750"/><circle cx="454.6" cy="183.4" r="1.750"/><circle cx="468.5" cy="169.0" r="1.750"/><circle cx="468.2" cy="171.5" r="1.750"/><circle cx="468.0" cy="174.0" r="1.750"/><circle cx="467.7" cy="176.5" r="1.750"/><circle cx="467.5" cy="179.0" r="1.750"/><circle cx="467.2" cy="181.5" r="1.750"/><circle cx="466.9" cy="186.2" r="1.750"/><circle cx="466.0" cy="192.7" r="1.750"/><circle cx="466.0" cy="195.0" r="1.750"/><circle cx="475.6" cy="190.0" r="1.750"/><circle cx="475.2" cy="193.0" r="1.750"/><circle cx="474.8" cy="196.0" r="1.750"/><circle cx="474.3" cy="199.0" r="1.750"/><circle cx="473.9" cy="202.0" r="1.750"/><circle cx="473.5" cy="205.0" r="1.750"/><circle cx="419.0" cy="203.2" r="1.750"/><circle cx="419.2" cy="206.7" r="1.750"/><circle cx="419.5" cy="210.2" r="1.750"/><circle cx="419.5" cy="216.0" r="1.750"/><circle cx="419.6" cy="218.0" r="1.750"/><circle cx="420.5" cy="225.2" r="1.750"/><circle cx="378.7" cy="212.7" r="1.750"/><circle cx="379.4" cy="215.8" r="1.750"/><circle cx="380.0" cy="219.0" r="1.750"/><circle cx="381.2" cy="224.5" r="1.750"/><circle cx="383.0" cy="234.0" r="1.750"/><circle cx="388.7" cy="235.2" r="1.750"/><circle cx="389.5" cy="238.1" r="1.750"/><circle cx="390.4" cy="241.1" r="1.750"/><circle cx="391.2" cy="244.0" r="1.750"/><circle cx="392.0" cy="247.3" r="1.750"/><circle cx="393.0" cy="251.5" r="1.750"/><circle cx="392.5" cy="256.5" r="1.750"/><circle cx="400.0" cy="218.2" r="1.750"/><circle cx="400.4" cy="221.7" r="1.750"/><circle cx="400.7" cy="225.2" r="1.750"/><circle cx="401.7" cy="231.5" r="1.750"/><circle cx="511.5" cy="185.2" r="1.750"/><circle cx="510.8" cy="188.9" r="1.750"/><circle cx="510.0" cy="192.7" r="1.750"/><circle cx="509.0" cy="196.5" r="1.750"/><circle cx="517.5" cy="187.0" r="1.750"/><circle cx="516.9" cy="190.5" r="1.750"/><circle cx="516.2" cy="194.0" r="1.750"/><circle cx="518.7" cy="199.5" r="1.750"/><circle cx="512.5" cy="203.2" r="1.750"/><circle cx="515.7" cy="208.5" r="1.750"/><circle cx="505.0" cy="208.5" r="1.750"/><circle cx="526.0" cy="180.2" r="1.750"/><circle cx="525.0" cy="185.2" r="1.750"/><circle cx="522.5" cy="189.0" r="1.750"/><circle cx="521.9" cy="191.5" r="1.750"/><circle cx="521.2" cy="194.0" r="1.750"/><circle cx="541.0" cy="179.0" r="1.750"/><circle cx="540.0" cy="184.0" r="1.750"/><circle cx="537.5" cy="190.2" r="1.750"/><circle cx="534.2" cy="197.7" r="1.750"/><circle cx="553.0" cy="186.5" r="1.750"/><circle cx="551.2" cy="191.5" r="1.750"/><circle cx="549.5" cy="195.2" r="1.750"/><circle cx="546.2" cy="202.7" r="1.750"/><circle cx="564.2" cy="181.5" r="1.750"/><circle cx="562.5" cy="185.2" r="1.750"/><circle cx="560.7" cy="190.2" r="1.750"/><circle cx="559.5" cy="195.2" r="1.750"/><circle cx="557.5" cy="200.2" r="1.750"/><circle cx="555.5" cy="204.0" r="1.750"/><circle cx="553.0" cy="210.2" r="1.750"/><circle cx="573.7" cy="189.0" r="1.750"/><circle cx="571.2" cy="194.0" r="1.750"/><circle cx="568.7" cy="199.5" r="1.750"/><circle cx="564.2" cy="207.7" r="1.750"/><circle cx="588.7" cy="194.0" r="1.750"/><circle cx="586.2" cy="199.0" r="1.750"/><circle cx="583.7" cy="203.5" r="1.750"/><circle cx="577.5" cy="207.7" r="1.750"/><circle cx="575.0" cy="212.7" r="1.750"/><circle cx="571.2" cy="218.5" r="1.750"/><circle cx="568.7" cy="222.7" r="1.750"/><circle cx="595.5" cy="196.0" r="1.750"/><circle cx="594.0" cy="199.3" r="1.750"/><circle cx="592.5" cy="202.7" r="1.750"/><circle cx="590.0" cy="207.7" r="1.750"/><circle cx="588.1" cy="210.8" r="1.750"/><circle cx="586.2" cy="214.0" r="1.750"/><circle cx="580.5" cy="224.5" r="1.750"/><circle cx="613.2" cy="219.3" r="1.750"/><circle cx="611.3" cy="221.9" r="1.750"/><circle cx="609.3" cy="224.6" r="1.750"/><circle cx="607.4" cy="227.2" r="1.750"/><circle cx="600.5" cy="237.7" r="1.750"/><circle cx="559.5" cy="225.2" r="1.750"/><circle cx="558.2" cy="228.3" r="1.750"/><circle cx="557.0" cy="231.5" r="1.750"/><circle cx="552.5" cy="238.5" r="1.750"/><circle cx="551.2" cy="241.0" r="1.750"/><circle cx="572.5" cy="238.5" r="1.750"/><circle cx="570.0" cy="244.0" r="1.750"/><circle cx="565.0" cy="251.5" r="1.750"/><circle cx="559.2" cy="259.5" r="1.750"/><circle cx="470.5" cy="223.5" r="1.750"/><circle cx="470.1" cy="226.6" r="1.750"/><circle cx="469.6" cy="229.6" r="1.750"/><circle cx="469.2" cy="232.7" r="1.750"/><circle cx="449.2" cy="229.0" r="1.750"/><circle cx="448.9" cy="232.7" r="1.750"/><circle cx="448.5" cy="236.5" r="1.750"/><circle cx="448.2" cy="240.2" r="1.750"/><circle cx="458.7" cy="239.0" r="1.750"/><circle cx="458.0" cy="242.7" r="1.750"/><circle cx="490.0" cy="236.5" r="1.750"/><circle cx="488.7" cy="241.5" r="1.750"/><circle cx="503.7" cy="224.0" r="1.750"/><circle cx="502.8" cy="227.1" r="1.750"/><circle cx="501.9" cy="230.2" r="1.750"/><circle cx="500.9" cy="233.4" r="1.750"/><circle cx="500.0" cy="236.5" r="1.750"/><circle cx="502.0" cy="224.5" r="1.750"/><circle cx="501.0" cy="227.7" r="1.750"/><circle cx="500.0" cy="230.8" r="1.750"/><circle cx="499.0" cy="234.0" r="1.750"/><circle cx="497.0" cy="229.0" r="1.750"/><circle cx="496.2" cy="232.7" r="1.750"/><circle cx="495.3" cy="236.5" r="1.750"/><circle cx="494.5" cy="240.2" r="1.750"/><circle cx="456.2" cy="256.5" r="1.750"/><circle cx="455.6" cy="259.6" r="1.750"/><circle cx="454.9" cy="262.8" r="1.750"/><circle cx="454.3" cy="265.9" r="1.750"/><circle cx="453.7" cy="269.0" r="1.750"/><circle cx="452.0" cy="274.0" r="1.750"/><circle cx="476.2" cy="256.5" r="1.750"/><circle cx="475.0" cy="259.8" r="1.750"/><circle cx="473.7" cy="263.2" r="1.750"/><circle cx="472.5" cy="266.5" r="1.750"/><circle cx="471.2" cy="272.0" r="1.750"/><circle cx="475.7" cy="276.0" r="1.750"/><circle cx="480.0" cy="257.7" r="1.750"/><circle cx="479.3" cy="261.0" r="1.750"/><circle cx="478.7" cy="264.4" r="1.750"/><circle cx="478.0" cy="267.7" r="1.750"/><circle cx="497.0" cy="257.7" r="1.750"/><circle cx="496.0" cy="261.9" r="1.750"/><circle cx="495.0" cy="266.0" r="1.750"/><circle cx="491.2" cy="277.7" r="1.750"/><circle cx="514.2" cy="264.0" r="1.750"/><circle cx="512.8" cy="267.3" r="1.750"/><circle cx="511.4" cy="270.7" r="1.750"/><circle cx="510.0" cy="274.0" r="1.750"/><circle cx="506.2" cy="280.2" r="1.750"/><circle cx="503.5" cy="286.0" r="1.750"/><circle cx="501.2" cy="291.2" r="1.750"/><circle cx="543.7" cy="280.2" r="1.750"/><circle cx="541.9" cy="283.4" r="1.750"/><circle cx="540.0" cy="286.5" r="1.750"/><circle cx="536.2" cy="293.7" r="1.750"/><circle cx="533.7" cy="298.7" r="1.750"/><circle cx="528.7" cy="307.5" r="1.750"/><circle cx="523.7" cy="286.5" r="1.750"/><circle cx="523.2" cy="288.0" r="1.750"/><circle cx="520.5" cy="293.7" r="1.750"/><circle cx="517.5" cy="299.5" r="1.750"/><circle cx="437.5" cy="276.5" r="1.750"/><circle cx="437.1" cy="279.5" r="1.750"/><circle cx="436.8" cy="282.5" r="1.750"/><circle cx="436.4" cy="285.5" r="1.750"/><circle cx="436.0" cy="288.5" r="1.750"/><circle cx="435.6" cy="279.0" r="1.750"/><circle cx="435.1" cy="283.0" r="1.750"/><circle cx="434.6" cy="287.0" r="1.750"/><circle cx="434.2" cy="299.2" r="1.750"/><circle cx="386.2" cy="267.7" r="1.750"/><circle cx="386.8" cy="270.6" r="1.750"/><circle cx="387.4" cy="273.6" r="1.750"/><circle cx="388.0" cy="276.5" r="1.750"/><circle cx="389.2" cy="281.0" r="1.750"/><circle cx="400.5" cy="268.2" r="1.750"/><circle cx="401.0" cy="271.8" r="1.750"/><circle cx="401.5" cy="275.4" r="1.750"/><circle cx="402.0" cy="279.0" r="1.750"/><circle cx="403.7" cy="284.5" r="1.750"/><circle cx="297.0" cy="285.0" r="1.750"/><circle cx="299.0" cy="287.5" r="1.750"/><circle cx="301.0" cy="290.0" r="1.750"/><circle cx="303.0" cy="292.5" r="1.750"/><circle cx="292.5" cy="293.7" r="1.750"/><circle cx="294.0" cy="296.2" r="1.750"/><circle cx="295.5" cy="298.7" r="1.750"/><circle cx="297.0" cy="301.2" r="1.750"/><circle cx="299.5" cy="302.5" r="1.750"/><circle cx="302.0" cy="306.2" r="1.750"/><circle cx="295.0" cy="306.2" r="1.750"/><circle cx="298.0" cy="310.0" r="1.750"/><circle cx="302.5" cy="314.5" r="1.750"/><circle cx="305.7" cy="318.0" r="1.750"/><circle cx="295.5" cy="316.5" r="1.750"/><circle cx="338.7" cy="300.0" r="1.750"/><circle cx="340.6" cy="303.8" r="1.750"/><circle cx="342.5" cy="307.5" r="1.750"/><circle cx="345.5" cy="315.0" r="1.750"/><circle cx="348.0" cy="320.0" r="1.750"/><circle cx="350.5" cy="323.7" r="1.750"/><circle cx="318.7" cy="328.0" r="1.750"/><circle cx="320.6" cy="330.2" r="1.750"/><circle cx="322.5" cy="332.5" r="1.750"/><circle cx="324.5" cy="334.5" r="1.750"/><circle cx="328.7" cy="339.5" r="1.750"/><circle cx="311.2" cy="350.5" r="1.750"/><circle cx="313.3" cy="352.7" r="1.750"/><circle cx="315.4" cy="354.8" r="1.750"/><circle cx="317.5" cy="357.0" r="1.750"/><circle cx="321.2" cy="360.0" r="1.750"/><circle cx="330.0" cy="363.7" r="1.750"/><circle cx="331.8" cy="365.5" r="1.750"/><circle cx="333.7" cy="367.4" r="1.750"/><circle cx="335.5" cy="369.2" r="1.750"/><circle cx="340.0" cy="373.0" r="1.750"/><circle cx="344.5" cy="383.0" r="1.750"/><circle cx="346.6" cy="385.2" r="1.750"/><circle cx="348.7" cy="387.5" r="1.750"/><circle cx="352.5" cy="390.5" r="1.750"/><circle cx="398.0" cy="303.0" r="1.750"/><circle cx="398.6" cy="306.0" r="1.750"/><circle cx="399.2" cy="309.0" r="1.750"/><circle cx="399.9" cy="312.0" r="1.750"/><circle cx="400.5" cy="315.0" r="1.750"/><circle cx="397.0" cy="319.5" r="1.750"/><circle cx="397.6" cy="322.2" r="1.750"/><circle cx="398.1" cy="324.8" r="1.750"/><circle cx="398.7" cy="327.5" r="1.750"/><circle cx="400.5" cy="333.7" r="1.750"/><circle cx="394.2" cy="332.5" r="1.750"/><circle cx="395.2" cy="336.2" r="1.750"/><circle cx="396.2" cy="340.0" r="1.750"/><circle cx="397.5" cy="345.0" r="1.750"/><circle cx="404.2" cy="343.0" r="1.750"/><circle cx="404.7" cy="346.0" r="1.750"/><circle cx="405.2" cy="349.0" r="1.750"/><circle cx="405.7" cy="352.0" r="1.750"/><circle cx="449.2" cy="292.0" r="1.750"/><circle cx="448.9" cy="295.5" r="1.750"/><circle cx="448.5" cy="299.0" r="1.750"/><circle cx="448.2" cy="302.5" r="1.750"/><circle cx="456.7" cy="311.2" r="1.750"/><circle cx="456.2" cy="314.9" r="1.750"/><circle cx="455.7" cy="318.7" r="1.750"/><circle cx="454.5" cy="327.0" r="1.750"/><circle cx="452.5" cy="272.0" r="1.750"/><circle cx="511.2" cy="291.2" r="1.750"/><circle cx="509.5" cy="294.1" r="1.750"/><circle cx="507.9" cy="297.1" r="1.750"/><circle cx="506.2" cy="300.0" r="1.750"/><circle cx="503.7" cy="305.0" r="1.750"/><circle cx="510.5" cy="310.0" r="1.750"/><circle cx="509.0" cy="313.8" r="1.750"/><circle cx="507.5" cy="317.5" r="1.750"/><circle cx="503.2" cy="325.0" r="1.750"/><circle cx="491.2" cy="326.2" r="1.750"/><circle cx="490.0" cy="329.3" r="1.750"/><circle cx="488.7" cy="332.4" r="1.750"/><circle cx="487.5" cy="335.5" r="1.750"/><circle cx="493.7" cy="338.0" r="1.750"/><circle cx="492.4" cy="340.9" r="1.750"/><circle cx="491.2" cy="343.7" r="1.750"/><circle cx="488.2" cy="349.5" r="1.750"/><circle cx="389.2" cy="382.0" r="1.750"/><circle cx="390.4" cy="384.8" r="1.750"/><circle cx="391.7" cy="387.5" r="1.750"/><circle cx="393.7" cy="391.2" r="1.750"/><circle cx="394.9" cy="394.9" r="1.750"/><circle cx="396.2" cy="398.7" r="1.750"/><circle cx="415.0" cy="379.5" r="1.750"/><circle cx="416.2" cy="385.0" r="1.750"/><circle cx="416.7" cy="388.7" r="1.750"/><circle cx="415.0" cy="395.0" r="1.750"/><circle cx="416.2" cy="400.5" r="1.750"/><circle cx="355.0" cy="423.7" r="1.750"/><circle cx="357.0" cy="425.0" r="1.750"/><circle cx="359.5" cy="426.5" r="1.750"/><circle cx="361.2" cy="427.5" r="1.750"/></g><path d="M360.500 446L369.500 458.700" stroke="#6fae8c" stroke-width=".7"/><path d="M369.500 458.700L382.500 447.500" stroke="#b5707a" stroke-width=".7"/><circle cx="355.500" cy="458" r=".9" fill="#bdbdbd"/><rect x="646.700" y="150" width="60" height="14.600" rx="1" fill="#fff" stroke="#dcdcdc" stroke-width=".7"/><path d="M677 150v14.600" stroke="#dcdcdc" stroke-width=".7"/><g fill="none" stroke="#8d8d8d" stroke-width=".7"><circle cx="655" cy="158" r="3.200"/><path d="M655 158h3.200M655 158v-3.200"/><path d="M658 160.500l3.500-6l3.500 6z"/><path d="M665.500 155.500h4.500v5h-4.500zM665.500 155.500l1.500-1.500h4.500v5l-1.500 1.500M670 155.500l1.500-1.500"/></g><g fill="#d8ecf7" stroke="#2a93c8" stroke-width=".8"><rect x="681" y="153" width="5.500" height="3.400"/><rect x="695.500" y="155.300" width="7.500" height="4"/><rect x="685" y="158.800" width="5.500" height="3"/><path d="M686.500 154.700c5 0 4 2.500 9 2.500M690.500 160.300c3 0 2-2 5-2" fill="none"/></g><rect x="692" y="170" width="14.600" height="41" rx="1" fill="#fff" stroke="#dcdcdc" stroke-width=".7"/><rect x="692" y="215" width="14.600" height="14" rx="1" fill="#fff" stroke="#dcdcdc" stroke-width=".7"/><g fill="none" stroke="#666" stroke-width=".8"><path d="M696.300 176v-2h2M700.300 174h2v2M702.300 178.500v2h-2M698.300 180.500h-2v-2"/><path d="M696.300 190.800h6M699.300 187.800v6M696.500 203.200h5.600"/><path d="M695.500 222h7.600M699.300 218.200v7.600M698 219.500l1.300-1.400l1.300 1.400M698 224.500l1.300 1.400l1.300-1.400M696.800 220.700l-1.400 1.300l1.400 1.300M701.800 220.700l1.400 1.300l-1.400 1.300"/></g></svg>
<!-- terrain -->
<svg class="b" style="left:735px;top:183px;" width="340" height="115" viewBox="735 183 340 115"><clipPath id="tc"><polygon points="741.2,220.3 758,209.2 774.2,200 784.2,194 792,191.5 808.8,189.5 823,187.8 837.5,188.6 855,190.8 900,197.4 915,199.5 982,207.7 1021,212.4 1050.7,218 1069.5,222 1069.5,273.3 1021,292.7 1010.7,294.8 915,284.5 900,283.5 882.6,281.5 866,278.4 833.4,268 796.5,255.6 785.5,263 741.5,247.3"/></clipPath><polygon points="741.2,220.3 758,209.2 774.2,200 784.2,194 792,191.5 808.8,189.5 823,187.8 837.5,188.6 855,190.8 900,197.4 915,199.5 982,207.7 1021,212.4 1050.7,218 1069.5,222 1069.5,273.3 1021,292.7 1010.7,294.8 915,284.5 900,283.5 882.6,281.5 866,278.4 833.4,268 796.5,255.6 785.5,263 741.5,247.3" fill="#684a3b"/><g clip-path="url(#tc)"><polygon points="985,209 1069,223 1069,238 1040,232 1000,222 975,214" fill="#6a4b3c"/><polygon points="741,224 800,229 860,239 920,251 980,263 1021,271 1069,262 1069,274 1021,293 1010,295 915,284.500 866,278 833,268 796,255.600 785,263 741,247" fill="#573c30"/><polygon points="772,209 800,208 840,210.500 884,213 884,214.800 840,214 800,212.500 772,211" fill="#140a06"/><polygon points="778,198.500 800,193 850,192.500 850,195.500 812,196.500 792,200.500" fill="#2c1b13"/><polygon points="760,214 790,214 830,216 830,219 790,219 750,222" fill="#3a261d"/><polygon points="905,203 950,209 950,212 905,207" fill="#2e1c14"/><polygon points="950,236 990,236 1010,242 1000,246 960,242" fill="#2a1912"/><polygon points="1015,236 1050,240 1064,247 1064,251 1040,247 1012,241" fill="#23140e"/><polygon points="858,218 900,219 905,223 862,222" fill="#2e1c14"/><polygon points="938.4,232.5 936.7,236.3 866.7,228.4 865.1,220.3 863.5,213.0 908.4,211.1 920.4,213.9" fill="none" stroke="#1b0f0a" stroke-width="0.55"/><polygon points="934.4,231.2 932.8,234.6 871.7,227.7 870.2,220.6 868.9,214.2 908.2,212.5 918.7,215.0" fill="none" stroke="#1b0f0a" stroke-width="0.55"/><polygon points="929.4,229.8 928.0,232.6 875.7,226.8 874.4,220.7 873.3,215.2 906.9,213.8 915.9,215.9" fill="none" stroke="#1b0f0a" stroke-width="0.55"/><polygon points="926.6,228.7 925.5,231.0 882.0,226.1 880.9,221.1 880.0,216.5 907.9,215.3 915.4,217.1" fill="none" stroke="#1b0f0a" stroke-width="0.55"/><polygon points="924.4,229.0 923.5,230.9 888.7,227.0 887.9,222.9 887.1,219.3 909.5,218.3 915.4,219.7" fill="none" stroke="#1b0f0a" stroke-width="0.55"/><polygon points="921.7,228.3 921.0,229.7 895.0,226.8 894.4,223.8 893.8,221.0 910.5,220.3 915.0,221.4" fill="none" stroke="#1b0f0a" stroke-width="0.55"/><polygon points="913.5,226.9 913.1,227.8 895.9,225.9 895.5,223.9 895.1,222.1 906.1,221.6 909.1,222.3" fill="none" stroke="#1b0f0a" stroke-width="0.55"/><polygon points="979.0,232.8 969.8,233.2 959.7,235.9 937.8,231.7 970.5,218.4 979.2,220.3" fill="none" stroke="#1b0f0a" stroke-width="0.55"/><polygon points="976.1,232.0 968.2,232.3 959.6,234.6 940.9,231.0 968.8,219.7 976.2,221.3" fill="none" stroke="#1b0f0a" stroke-width="0.55"/><polygon points="973.5,231.1 966.9,231.4 959.8,233.3 944.3,230.4 967.4,221.0 973.5,222.3" fill="none" stroke="#1b0f0a" stroke-width="0.55"/><polygon points="972.1,229.8 966.9,230.1 961.3,231.6 949.1,229.2 967.4,221.8 972.2,222.8" fill="none" stroke="#1b0f0a" stroke-width="0.55"/><polygon points="970.1,229.8 966.3,230.0 962.2,231.1 953.1,229.4 966.6,223.9 970.2,224.7" fill="none" stroke="#1b0f0a" stroke-width="0.55"/><polygon points="964.6,228.6 962.1,228.7 959.4,229.4 953.6,228.3 962.3,224.8 964.6,225.3" fill="none" stroke="#1b0f0a" stroke-width="0.55"/><polygon points="1054.2,256.5 993.5,242.5 1003.9,238.4 996.3,235.2 1001.0,235.7 1061.1,244.8 1059.3,245.4" fill="none" stroke="#1b0f0a" stroke-width="0.55"/><polygon points="1051.0,255.4 997.0,243.0 1006.3,239.3 999.5,236.5 1003.7,236.9 1057.2,245.1 1055.6,245.6" fill="none" stroke="#1b0f0a" stroke-width="0.55"/><polygon points="1048.5,253.8 1001.2,242.9 1009.4,239.6 1003.4,237.2 1007.1,237.6 1054.0,244.7 1052.6,245.1" fill="none" stroke="#1b0f0a" stroke-width="0.55"/><polygon points="1047.3,252.8 1006.6,243.5 1013.6,240.7 1008.5,238.5 1011.7,238.9 1051.9,245.0 1050.7,245.4" fill="none" stroke="#1b0f0a" stroke-width="0.55"/><polygon points="1045.9,251.6 1012.0,243.7 1017.8,241.4 1013.5,239.6 1016.2,239.9 1049.8,245.0 1048.8,245.3" fill="none" stroke="#1b0f0a" stroke-width="0.55"/><polygon points="1042.7,251.6 1015.4,245.3 1020.1,243.4 1016.7,242.0 1018.8,242.2 1045.8,246.3 1045.0,246.600" fill="none" stroke="#1b0f0a" stroke-width="0.55"/><polygon points="1036.4,249.5 1015.8,244.8 1019.3,243.4 1016.7,242.3 1018.3,242.4 1038.7,245.6 1038.1,245.7" fill="none" stroke="#1b0f0a" stroke-width="0.55"/><polygon points="1039.4,248.7 1025.5,245.5 1027.9,244.5 1026.1,243.8 1027.2,243.9 1041.0,246.0 1040.6,246.1" fill="none" stroke="#1b0f0a" stroke-width="0.55"/><polygon points="1014.5,237.1 999.9,236.6 979.2,237.4 977.9,236.5 958.2,229.2 958.7,226.0 981.3,226.1" fill="none" stroke="#1b0f0a" stroke-width="0.55"/><polygon points="1009.5,236.2 997.5,235.8 980.4,236.4 979.3,235.6 963.1,229.6 963.5,227.0 982.2,227.1" fill="none" stroke="#1b0f0a" stroke-width="0.55"/><polygon points="1003.5,235.0 994.0,234.7 980.6,235.1 979.8,234.6 967.0,229.9 967.3,227.8 982.0,227.8" fill="none" stroke="#1b0f0a" stroke-width="0.55"/><polygon points="998.1,234.7 991.2,234.5 981.4,234.8 980.8,234.4 971.5,231.0 971.7,229.5 982.4,229.5" fill="none" stroke="#1b0f0a" stroke-width="0.55"/><polygon points="996.3,234.4 991.9,234.2 985.8,234.5 985.4,234.2 979.6,232.0 979.7,231.1 986.5,231.1" fill="none" stroke="#1b0f0a" stroke-width="0.55"/><polygon points="873.3,209.8 792.0,198.9 833.2,197.1 833.2,195.7 843.7,198.3 867.6,204.1 870.1,205.3 859.6,204.6" fill="none" stroke="#1b0f0a" stroke-width="0.55"/><polygon points="868.4,209.0 799.0,199.7 834.2,198.2 834.2,196.9 843.1,199.2 863.5,204.1 865.6,205.1 856.7,204.6" fill="none" stroke="#1b0f0a" stroke-width="0.55"/><polygon points="860.9,207.8 803.4,200.1 832.5,198.9 832.5,197.9 839.9,199.7 856.8,203.8 858.6,204.6 851.2,204.2" fill="none" stroke="#1b0f0a" stroke-width="0.55"/><polygon points="854.6,206.7 809.0,200.5 832.1,199.6 832.1,198.8 837.9,200.2 851.3,203.5 852.7,204.1 846.9,203.8" fill="none" stroke="#1b0f0a" stroke-width="0.55"/><polygon points="848.2,204.7 814.6,200.2 831.6,199.5 831.6,198.9 836.0,200.0 845.8,202.4 846.9,202.9 842.5,202.6" fill="none" stroke="#1b0f0a" stroke-width="0.55"/><polygon points="848.5,204.8 826.8,201.8 837.8,201.4 837.8,201.0 840.6,201.7 847.0,203.2 847.6,203.5 844.8,203.4" fill="none" stroke="#1b0f0a" stroke-width="0.55"/><polygon points="810.1,201.0 788.2,214.8 771.5,213.6 764.9,215.2 777.3,204.7 791.3,200.6" fill="none" stroke="#1b0f0a" stroke-width="0.55"/><polygon points="806.2,202.2 788.1,213.5 774.3,212.6 768.9,213.9 779.2,205.3 790.6,201.9" fill="none" stroke="#1b0f0a" stroke-width="0.55"/><polygon points="803.8,202.7 789.6,211.6 778.8,210.9 774.5,211.9 782.6,205.1 791.6,202.5" fill="none" stroke="#1b0f0a" stroke-width="0.55"/><polygon points="800.6,204.0 790.3,210.5 782.4,210.0 779.3,210.7 785.2,205.8 791.7,203.9" fill="none" stroke="#1b0f0a" stroke-width="0.55"/><polygon points="797.7,204.5 791.2,208.5 786.3,208.2 784.3,208.7 788.0,205.6 792.1,204.3" fill="none" stroke="#1b0f0a" stroke-width="0.55"/><polygon points="887.2,211.6 888.5,213.5 874.4,213.1 851.0,208.7 854.7,203.8 880.5,204.4 894.6,207.8 893.8,209.5" fill="none" stroke="#1b0f0a" stroke-width="0.55"/><polygon points="883.6,210.7 884.6,212.1 873.6,211.8 855.3,208.4 858.2,204.6 878.3,205.1 889.4,207.7 888.7,209.0" fill="none" stroke="#1b0f0a" stroke-width="0.55"/><polygon points="878.7,210.0 879.4,211.0 871.5,210.8 858.4,208.3 860.5,205.6 874.9,205.9 882.8,207.8 882.4,208.7" fill="none" stroke="#1b0f0a" stroke-width="0.55"/><polygon points="874.0,208.9 874.4,209.5 869.6,209.4 861.7,207.9 862.9,206.2 871.7,206.4 876.5,207.6 876.2,208.1" fill="none" stroke="#1b0f0a" stroke-width="0.55"/><polygon points="959.6,216.6 948.0,216.3 944.4,217.5 917.6,212.6 915.1,212.5 902.1,207.2 944.6,209.4" fill="none" stroke="#1b0f0a" stroke-width="0.55"/><polygon points="954.5,215.6 945.6,215.4 942.7,216.4 921.8,212.6 919.9,212.5 909.7,208.3 942.9,210.0" fill="none" stroke="#1b0f0a" stroke-width="0.55"/><polygon points="948.6,214.8 942.2,214.7 940.2,215.3 925.2,212.6 923.7,212.5 916.5,209.6 940.3,210.8" fill="none" stroke="#1b0f0a" stroke-width="0.55"/><polygon points="944.7,213.9 940.8,213.8 939.5,214.2 930.4,212.6 929.6,212.5 925.1,210.7 939.6,211.5" fill="none" stroke="#1b0f0a" stroke-width="0.55"/><polygon points="1008.6,227.8 997.6,226.7 991.9,224.0 987.0,225.0 975.9,219.9 985.0,217.3 987.8,217.9 993.4,218.0 1014.5,222.6" fill="none" stroke="#1b0f0a" stroke-width="0.55"/><polygon points="1005.2,226.1 997.5,225.3 993.4,223.4 990.0,224.0 982.1,220.5 988.6,218.6 990.5,219.1 994.5,219.2 1009.4,222.4" fill="none" stroke="#1b0f0a" stroke-width="0.55"/><polygon points="1004.7,224.9 1000.1,224.4 997.8,223.3 995.7,223.7 991.2,221.6 994.9,220.5 996.1,220.8 998.4,220.9 1007.1,222.8" fill="none" stroke="#1b0f0a" stroke-width="0.55"/><polygon points="818.0,227.3 777.2,219.8 781.3,215.7 792.3,215.7 827.5,218.2 830.5,218.7" fill="none" stroke="#1b0f0a" stroke-width="0.55"/><polygon points="816.5,226.1 784.7,220.2 787.9,217.1 796.5,217.1 823.9,219.0 826.3,219.4" fill="none" stroke="#1b0f0a" stroke-width="0.55"/><polygon points="813.3,225.0 790.5,220.7 792.8,218.4 799.0,218.5 818.6,219.9 820.3,220.1" fill="none" stroke="#1b0f0a" stroke-width="0.55"/><polygon points="812.4,224.0 798.5,221.4 799.9,220.0 803.7,220.0 815.6,220.9 816.600,221.1" fill="none" stroke="#1b0f0a" stroke-width="0.55"/><polyline points="920.4,278.2 953.6,282.4 968.4,284.0 1006.9,288.9 1044.3,279.7 1069.0,271.2" fill="none" stroke="#1b0f0a" stroke-width="1.1"/><polyline points="812.8,242.6 849.4,251.2 883.2,258.3 913.2,263.2 930.7,266.3 944.8,268.5 962.5,271.0" fill="none" stroke="#1b0f0a" stroke-width="0.6"/><polyline points="831.3,263.2 850.1,269.0 869.2,274.4 893.1,277.7 901.2,279.2" fill="none" stroke="#24150f" stroke-width="0.5"/><polyline points="836.6,254.6 869.0,262.5 892.2,266.7 924.3,271.0 950.6,274.8 971.3,278.3 999.2,282.0" fill="none" stroke="#2f1d15" stroke-width="0.5"/><polyline points="899.1,260.2 924.9,264.1 955.1,269.3 972.2,271.7 1002.0,276.6" fill="none" stroke="#24150f" stroke-width="1.1"/><polyline points="813.3,248.7 836.8,254.6 862.1,261.5 881.5,265.3 904.9,268.5 922.7,271.2" fill="none" stroke="#1b0f0a" stroke-width="0.6"/><polyline points="938.6,280.4 971.3,284.3 997.9,287.9 1014.0,289.1 1024.5,286.6" fill="none" stroke="#24150f" stroke-width="0.6"/><polyline points="872.2,242.9 887.1,245.6 922.9,252.3 955.9,259.2 975.5,262.9" fill="none" stroke="#1b0f0a" stroke-width="0.6"/><polyline points="866.2,272.2 891.9,276.9 928.1,280.9 928.5,280.6" fill="none" stroke="#24150f" stroke-width="0.8"/><polyline points="819.9,260.1 855.3,271.3 874.0,276.3 910.5,280.5 930.4,282.8" fill="none" stroke="#24150f" stroke-width="0.5"/><polyline points="967.4,280.9 1001.1,285.2 1033.4,281.6 1060.1,273.2 1069.0,270.1" fill="none" stroke="#24150f" stroke-width="0.6"/><polyline points="908.2,267.4 939.7,272.1 950.0,273.7" fill="none" stroke="#24150f" stroke-width="0.6"/><polyline points="819.9,261.4 857.9,273.2 894.4,280.5 911.7,281.9" fill="none" stroke="#1b0f0a" stroke-width="1.1"/><polyline points="1023.3,277.9 1044.7,272.1 1069.0,266.3" fill="none" stroke="#2f1d15" stroke-width="0.6"/><polyline points="920.6,272.5 935.4,274.3 960.8,278.2 980.5,281.0 1010.9,284.8 1037.2,279.3 1052.6,274.4 1069.0,269.3" fill="none" stroke="#1b0f0a" stroke-width="1.1"/><polyline points="751.3,234.2 780.6,239.5 818.1,242.8 842.6,248.6 861.1,252.7" fill="none" stroke="#24150f" stroke-width="0.5"/><polyline points="899.4,257.0 938.1,263.3 961.3,267.2 984.6,271.5" fill="none" stroke="#24150f" stroke-width="0.8"/><polyline points="781.9,246.6 821.1,249.8 844.2,256.0 858.2,259.0 887.0,265.2 904.6,267.8 911.3,268.5" fill="none" stroke="#2f1d15" stroke-width="0.6"/><polyline points="883.1,270.1 919.3,274.5 948.8,278.8 970.6,281.5 985.1,283.8 995.0,285.2" fill="none" stroke="#1b0f0a" stroke-width="0.8"/><polyline points="747.8,248.4 762.9,253.5 787.1,260.5 815.7,260.7 842.0,269.1 868.7,277.6 886.9,280.3" fill="none" stroke="#2f1d15" stroke-width="1.1"/><polyline points="1026.8,287.7 1064.1,273.6 1069.0,272.0" fill="none" stroke="#24150f" stroke-width="1.1"/><polyline points="826.5,247.8 859.9,255.9 874.8,259.0 900.6,263.8 937.7,269.1 946.0,270.5" fill="none" stroke="#2f1d15" stroke-width="1.1"/><polyline points="906.8,270.5 944.5,275.6 968.7,279.3 987.8,281.6 1023.4,283.4 1053.0,274.5" fill="none" stroke="#2f1d15" stroke-width="1.1"/><polyline points="823.5,261.5 849.9,270.0 876.9,276.8 894.8,279.6 929.9,282.8 949.9,285.6 980.6,289.0" fill="none" stroke="#1b0f0a" stroke-width="0.6"/><polyline points="949.1,288.2 964.4,290.0 984.1,292.0 1022.8,292.1 1040.3,284.9 1069.0,273.5" fill="none" stroke="#1b0f0a" stroke-width="0.8"/><polyline points="972.0,266.9 1003.2,272.5 1022.1,274.7" fill="none" stroke="#1b0f0a" stroke-width="0.8"/><polyline points="994.0,276.8 1023.6,279.1 1054.1,271.0" fill="none" stroke="#1b0f0a" stroke-width="0.6"/><polyline points="941.8,275.2 979.5,280.6 1004.5,283.9" fill="none" stroke="#1b0f0a" stroke-width="0.6"/><polyline points="980.8,291.0 1017.2,292.8 1041.4,284.0 1055.8,278.4 1063.3,275.4" fill="none" stroke="#1b0f0a" stroke-width="1.1"/><polyline points="912.1,279.9 934.5,282.6 949.2,284.3 964.6,285.8 987.9,288.9" fill="none" stroke="#1b0f0a" stroke-width="0.5"/><polyline points="765.1,240.0 797.4,241.5 833.1,250.3 871.3,259.6 906.0,265.2 938.8,270.0 941.8,270.7" fill="none" stroke="#24150f" stroke-width="1.1"/><polyline points="751.5,229.5 767.1,231.6 786.0,234.3 812.7,237.0 843.9,243.0 869.0,248.1 907.3,255.6 929.7,259.3 940.4,261.3" fill="none" stroke="#1b0f0a" stroke-width="0.6"/><polyline points="991.3,277.6 1008.2,280.4 1041.7,275.1 1056.5,271.2 1069.0,267.7" fill="none" stroke="#24150f" stroke-width="0.5"/><polyline points="939.1,269.8 956.1,272.3 977.7,275.7 1010.7,280.4 1029.9,278.0 1049.9,272.6 1069.0,267.9" fill="none" stroke="#24150f" stroke-width="0.6"/><polyline points="794.1,229.8 820.3,233.7 838.9,236.7 854.0,239.6 886.9,245.8 888.3,246.2" fill="none" stroke="#2f1d15" stroke-width="0.6"/><polyline points="753.9,251.5 777.0,259.4 792.9,257.9 819.7,263.3 835.1,268.0 850.4,273.0 865.9,277.8 876.2,279.8" fill="none" stroke="#1b0f0a" stroke-width="0.5"/><polyline points="1014.6,286.4 1033.5,281.6 1069.0,270.4" fill="none" stroke="#1b0f0a" stroke-width="1.1"/><polyline points="1024.7,271.2 1055.0,265.5 1069.0,263.0" fill="none" stroke="#2f1d15" stroke-width="1.1"/><polyline points="921.0,282.0 946.7,285.3 966.5,287.1 988.6,289.7 1022.7,290.3 1044.8,281.5 1061.0,275.6 1069.0,272.6" fill="none" stroke="#1b0f0a" stroke-width="0.6"/><polyline points="758.7,225.7 780.1,227.9 796.7,229.0 818.9,232.8 847.3,237.9 878.3,243.7 903.8,248.5" fill="none" stroke="#1b0f0a" stroke-width="0.5"/><polyline points="942.9,281.3 960.3,283.2 978.7,285.7 1010.3,289.6 1023.1,287.9" fill="none" stroke="#1b0f0a" stroke-width="0.5"/><polyline points="776.0,253.7 796.8,251.1 811.2,255.2 828.4,260.3 851.8,267.2 881.9,274.4 921.4,279.0 951.2,282.9 961.5,284.2" fill="none" stroke="#2f1d15" stroke-width="0.8"/><polyline points="775.0,256.4 800.3,254.4 834.3,265.6 862.1,274.2 862.6,273.8" fill="none" stroke="#2f1d15" stroke-width="0.5"/><polyline points="800.8,254.2 833.1,264.7 840.9,267.0" fill="none" stroke="#1b0f0a" stroke-width="0.6"/><polyline points="903.0,274.3 926.1,277.0 965.7,282.5 996.5,286.4" fill="none" stroke="#2f1d15" stroke-width="0.6"/><polyline points="782.2,243.5 800.6,242.0 833.3,250.7 852.5,255.2 874.9,260.2 911.3,266.0 946.1,271.1 947.0,271.3" fill="none" stroke="#1b0f0a" stroke-width="0.8"/><polyline points="747.4,239.3 774.4,246.1 806.4,247.3 840.9,256.600 879.2,265.7 889.1,267.1" fill="none" stroke="#2f1d15" stroke-width="0.6"/><polyline points="1017.0,287.8 1038.4,281.2 1060.0,274.2" fill="none" stroke="#2f1d15" stroke-width="0.6"/><polyline points="1020.0,291.1 1034.9,285.6 1062.1,275.4" fill="none" stroke="#24150f" stroke-width="1.1"/><polyline points="917.0,267.9 937.2,271.0 965.3,274.9 979.4,277.1 988.3,278.6" fill="none" stroke="#1b0f0a" stroke-width="1.1"/><polyline points="833.6,262.9 865.5,272.4 885.9,275.6 907.6,278.5 922.2,279.6" fill="none" stroke="#1b0f0a" stroke-width="0.5"/><polyline points="923.2,258.2 952.0,263.8 988.8,270.3 1013.6,274.3 1041.4,270.9 1063.3,265.9 1069.0,265.0" fill="none" stroke="#1b0f0a" stroke-width="0.8"/><polyline points="749.8,238.7 768.6,242.9 798.0,243.8 807.1,246.2" fill="none" stroke="#1b0f0a" stroke-width="0.8"/><polyline points="780.7,228.7 806.8,231.2 844.3,238.2 874.3,243.9 898.6,248.2" fill="none" stroke="#1b0f0a" stroke-width="0.5"/><polyline points="767.7,244.4 801.4,246.3 830.5,254.2" fill="none" stroke="#1b0f0a" stroke-width="0.6"/><polyline points="770.6,232.1 796.6,233.6 820.3,237.8" fill="none" stroke="#2f1d15" stroke-width="1.1"/><polyline points="875.2,279.6 892.7,281.6 916.1,283.8" fill="none" stroke="#1b0f0a" stroke-width="0.8"/><polyline points="959.8,267.0 986.3,271.7 1019.4,276.8 1043.4,271.4 1069.0,265.7" fill="none" stroke="#1b0f0a" stroke-width="1.1"/><polyline points="772.6,256.3 797.9,254.3 837.5,267.2 870.2,276.8 873.9,277.7" fill="none" stroke="#2f1d15" stroke-width="0.6"/><polyline points="896.9,280.4 920.2,282.9 934.3,284.5 957.7,286.7 978.2,289.3 994.9,291.2" fill="none" stroke="#1b0f0a" stroke-width="0.6"/><polyline points="796.8,228.1 835.7,234.4 871.5,240.8 886.1,243.5 920.1,250.5 956.5,257.9 957.3,257.9" fill="none" stroke="#1b0f0a" stroke-width="0.6"/><polyline points="747.9,234.5 783.3,241.6 807.2,241.9 840.8,249.7 858.7,253.8 883.7,259.1 903.3,261.8" fill="none" stroke="#2f1d15" stroke-width="0.6"/><polyline points="819.0,240.4 836.2,243.8 862.1,249.3 886.0,254.5 923.1,260.4 929.5,261.9" fill="none" stroke="#24150f" stroke-width="1.1"/><polyline points="872.9,243.5 903.0,249.2 938.2,256.0 955.6,259.7 978.3,263.8 983.2,265.1" fill="none" stroke="#1b0f0a" stroke-width="0.6"/><polyline points="773.0,237.9 799.4,238.7 838.5,247.5 867.3,254.0 895.5,259.4 909.5,261.5" fill="none" stroke="#1b0f0a" stroke-width="0.5"/><polyline points="745.4,229.4 765.5,232.1 800.4,234.6 817.1,238.4" fill="none" stroke="#1b0f0a" stroke-width="1.1"/><polyline points="826.8,254.5 850.4,260.7 882.9,268.4 921.6,273.5 934.3,274.7" fill="none" stroke="#1b0f0a" stroke-width="0.8"/><polyline points="756.9,241.7 784.2,249.1 807.9,247.9 828.7,253.4" fill="none" stroke="#1b0f0a" stroke-width="1.1"/><polyline points="903.6,248.4 920.7,251.8 944.4,256.2 979.6,263.2 997.3,266.3 1017.9,270.1 1028.7,269.4" fill="none" stroke="#1b0f0a" stroke-width="0.6"/><polyline points="911.5,281.4 940.9,284.5 978.4,288.7 995.6,290.8 1027.6,288.3 1059.2,276.5 1069.0,272.7" fill="none" stroke="#2f1d15" stroke-width="1.1"/><polyline points="923.2,213.0 940.1,214.9 971.8,219.3 987.6,221.7 1018.5,226.2 1026.6,226.7" fill="none" stroke="#2f1d15" stroke-width="0.5"/><polyline points="776.9,206.5 791.0,202.3 818.4,200.8 844.5,202.3 864.1,205.2 897.5,210.5" fill="none" stroke="#1b0f0a" stroke-width="0.5"/><polyline points="846.1,210.2 877.0,214.8 885.6,216.5" fill="none" stroke="#2f1d15" stroke-width="0.7"/><polyline points="1019.7,214.7 1048.4,219.9 1069.0,223.8" fill="none" stroke="#1b0f0a" stroke-width="0.5"/><polyline points="866.0,231.7 882.8,234.8 906.1,239.7 927.0,243.5 957.7,249.4 974.7,252.5 990.2,254.9" fill="none" stroke="#2f1d15" stroke-width="0.5"/><polyline points="992.6,213.5 1016.600,216.2 1049.4,221.4 1069.0,225.1" fill="none" stroke="#1b0f0a" stroke-width="0.5"/><polyline points="760.2,215.9 775.8,210.8 794.5,207.3 829.1,207.6 856.2,210.7 876.2,214.1" fill="none" stroke="#1b0f0a" stroke-width="0.5"/><polyline points="935.2,219.4 951.1,221.8 969.6,224.4 999.5,228.7 1030.6,232.9 1047.0,233.7" fill="none" stroke="#24150f" stroke-width="0.7"/><polyline points="1030.9,226.8 1068.8,231.3 1069.0,231.7" fill="none" stroke="#24150f" stroke-width="0.45"/><polyline points="782.6,224.7 808.1,227.3 819.0,228.6" fill="none" stroke="#24150f" stroke-width="0.5"/><polyline points="962.8,231.3 992.5,235.6 1011.8,239.0 1023.5,240.1" fill="none" stroke="#1b0f0a" stroke-width="0.5"/><polyline points="815.4,219.1 841.5,222.6 876.3,228.4 898.1,232.7 922.5,237.0" fill="none" stroke="#2f1d15" stroke-width="0.45"/><polyline points="802.6,212.9 835.4,215.6" fill="none" stroke="#2f1d15" stroke-width="0.5"/><polyline points="921.4,215.8 943.1,218.8 958.3,221.0" fill="none" stroke="#1b0f0a" stroke-width="0.45"/><polyline points="741.3,222.3 772.5,209.7 808.3,203.1 831.1,203.5 858.3,206.9 884.5,211.3" fill="none" stroke="#1b0f0a" stroke-width="0.7"/><polyline points="935.3,227.4 959.0,231.0 973.0,233.7 1006.2,238.5 1024.6,241.1 1030.0,241.1" fill="none" stroke="#1b0f0a" stroke-width="0.7"/><polyline points="865.5,223.3 884.8,226.4 900.5,229.7 924.2,233.6 944.0,236.8 972.5,241.9 999.1,246.600" fill="none" stroke="#2f1d15" stroke-width="0.45"/><polyline points="1006.8,212.3 1032.8,216.1 1051.7,219.6 1069.0,223.6" fill="none" stroke="#24150f" stroke-width="0.7"/><polyline points="827.2,222.7 857.1,227.1 866.1,228.8" fill="none" stroke="#2f1d15" stroke-width="0.5"/><polyline points="747.0,223.3 762.8,224.6 779.4,225.9 795.7,227.1 809.8,229.2 831.6,232.9 855.7,236.6 883.2,242.4" fill="none" stroke="#2f1d15" stroke-width="0.5"/><polyline points="805.7,208.3 820.4,208.4 854.3,212.6 884.0,217.5" fill="none" stroke="#1b0f0a" stroke-width="0.5"/><polyline points="1014.3,236.3 1045.4,238.5 1069.0,239.4" fill="none" stroke="#1b0f0a" stroke-width="0.5"/><polyline points="838.6,220.5 857.6,223.3 893.4,229.7 898.6,230.8" fill="none" stroke="#24150f" stroke-width="0.5"/><polyline points="927.9,229.4 966.600,235.8 979.8,237.8" fill="none" stroke="#24150f" stroke-width="0.45"/><polyline points="886.4,242.9 910.0,247.7 930.9,251.6 960.5,257.4" fill="none" stroke="#2f1d15" stroke-width="0.7"/><polyline points="791.9,208.3 811.8,207.8 847.1,210.7 873.0,214.9" fill="none" stroke="#2f1d15" stroke-width="0.5"/><polyline points="769.1,212.8 805.4,206.8 827.4,207.2 844.6,209.1 860.8,211.6 886.7,215.9" fill="none" stroke="#1b0f0a" stroke-width="0.7"/><polyline points="893.9,218.5 915.1,222.3 931.0,224.9 951.3,227.8 967.7,230.4 980.3,232.4" fill="none" stroke="#1b0f0a" stroke-width="0.5"/><polyline points="844.0,194.7 863.5,197.6 889.5,201.2 925.9,206.5 957.7,210.7 987.4,214.3" fill="none" stroke="#1b0f0a" stroke-width="0.5"/><polyline points="833.2,228.7 860.6,232.9 887.8,238.7 912.6,243.0 918.4,244.6" fill="none" stroke="#1b0f0a" stroke-width="0.5"/><polyline points="759.9,210.4 784.8,196.8 801.6,192.9 819.4,191.2 828.6,191.3" fill="none" stroke="#2f1d15" stroke-width="0.45"/><polyline points="761.1,218.7 792.2,214.2 800.9,214.4" fill="none" stroke="#24150f" stroke-width="0.7"/><polyline points="991.8,255.9 1018.2,260.8 1048.4,258.2 1069.0,256.2" fill="none" stroke="#24150f" stroke-width="0.45"/><polyline points="857.3,237.2 890.7,244.1 916.600,249.0 935.1,252.8 973.4,260.5 990.1,263.9" fill="none" stroke="#24150f" stroke-width="0.7"/><polyline points="778,197.500 784,194.600 792,192.200 808.800,190.200 823,188.600 837.500,189.400 855,191.600 900,198.200 915,200.300 982,208.500 1021,213.200 1050.700,218.800 1069.500,222.800" fill="none" stroke="#120905" stroke-width="1.600"/><polyline points="810.0,190.4 814.0,192.9 809.0,196.4" fill="none" stroke="#1b0f0a" stroke-width=".6"/><polyline points="816.2,189.6 820.2,192.1 815.2,195.6" fill="none" stroke="#1b0f0a" stroke-width=".6"/><polyline points="822.4,188.9 826.4,191.4 821.4,194.9" fill="none" stroke="#1b0f0a" stroke-width=".6"/><polyline points="828.6,189.1 832.6,191.6 827.6,195.1" fill="none" stroke="#1b0f0a" stroke-width=".6"/><polyline points="834.8,189.5 838.8,192.0 833.8,195.5" fill="none" stroke="#1b0f0a" stroke-width=".6"/><polyline points="841.0,190.0 845.0,192.5 840.0,196.0" fill="none" stroke="#1b0f0a" stroke-width=".6"/><polyline points="847.2,190.8 851.2,193.3 846.2,196.8" fill="none" stroke="#1b0f0a" stroke-width=".6"/><polyline points="853.4,191.6 857.4,194.1 852.4,197.6" fill="none" stroke="#1b0f0a" stroke-width=".6"/><polygon points="1010.700,294.800 1021,292.700 1069.500,273.300 1069.500,266 1019,276" fill="#5a3f32"/><polyline points="1019,276 1010.700,294.800" fill="none" stroke="#1b0f0a" stroke-width=".6"/><polyline points="1019,276 1069.500,266" fill="none" stroke="#1b0f0a" stroke-width=".6"/></g><polygon points="740,225.400 744,226.200 740,227.800" fill="#fff"/><polygon points="740,232.300 752.500,233.200 740,240" fill="#fff"/><polygon points="740,241.900 752.500,243 740,247.300" fill="#fff"/><polyline points="741.500,232 756,233.500 800,240" fill="none" stroke="#1d110c" stroke-width=".7"/><polyline points="741.500,241.500 756,243.300 800,250" fill="none" stroke="#1d110c" stroke-width=".7"/></svg>
<!-- viewcube -->
<svg class="b" style="left:975px;top:140px;" width="90" height="55" viewBox="975 140 90 55"><ellipse cx="1018" cy="177.500" rx="38" ry="10.500" fill="#fbfbfb" stroke="#d6d6d6" stroke-width=".8"/><ellipse cx="1018" cy="177.500" rx="30" ry="7.800" fill="#fff" stroke="#e2e2e2" stroke-width=".6"/><ellipse cx="1018" cy="180" rx="15" ry="3" fill="#e2e2e2" opacity=".7"/><polygon points="999.800,149.500 1020.500,152 1020.500,179 1000.500,173.500" fill="#ededed" stroke="#cfcfcf" stroke-width=".6"/><polygon points="1020.500,152 1037,148.500 1036.500,171.500 1020.500,179" fill="#e4e4e4" stroke="#cfcfcf" stroke-width=".6"/><polygon points="999.800,149.500 1017,145 1037,148.500 1020.500,152" fill="#fafafa" stroke="#d2d2d2" stroke-width=".6"/><rect x="981.5" y="174.8" width="5" height="2.400" rx="1" fill="#eee" stroke="#c9c9c9" stroke-width=".5"/><rect x="1049.5" y="174.8" width="5" height="2.400" rx="1" fill="#eee" stroke="#c9c9c9" stroke-width=".5"/><rect x="990.5" y="183.3" width="5" height="2.400" rx="1" fill="#eee" stroke="#c9c9c9" stroke-width=".5"/><rect x="1041.5" y="183.3" width="5" height="2.400" rx="1" fill="#eee" stroke="#c9c9c9" stroke-width=".5"/></svg>
<div class="t" style="left:1003.500px;top:155px;font-size:12.500px;line-height:13px;color:#b4b4b4;transform:skewY(8deg) scaleX(.95)">后</div>
<div class="t" style="left:1021.500px;top:154px;font-size:12px;line-height:13px;color:#b0b0b0;transform:skewY(-14deg) scaleX(.78)">左</div>
<svg class="b" style="left:1050.5px;top:205.5px;" width="19" height="65" viewBox="0 0 19 65"><rect x=".4" y=".4" width="18.200" height="64.200" rx="2.500" fill="rgba(244,244,244,.86)" stroke="#b5b5b5" stroke-width=".9"/><circle cx="15" cy="3.800" r="1.400" fill="#fff" stroke="#888" stroke-width=".5"/><circle cx="9.300" cy="22" r="5.200" fill="rgba(255,255,255,.6)" stroke="#9a9a9a" stroke-width="1"/><circle cx="9.300" cy="22" r="2.900" fill="none" stroke="#a9a9a9" stroke-width=".9"/><path d="M2 31.500h15M2 60h15" stroke="#c9c9c9" stroke-width=".5"/><path d="M5 42l5-2.500v4l-3.500 1.500z" fill="#5cb85c"/><circle cx="10.500" cy="45.500" r="1" fill="#fff"/><path d="M4 52h11M4 55h11" stroke="#8a7a72" stroke-width=".7" opacity=".6"/><path d="M6 62h7l-3.500 1.800z" fill="#555"/></svg>
<svg class="b" style="left:831px;top:272.5px;" width="13" height="13" viewBox="0 0 13 13"><path d="M6.500 .7l2.300 2.600h-1.500v2.400h2.400v-1.500l2.600 2.300l-2.600 2.300v-1.500h-2.400v2.400h1.500l-2.300 2.600l-2.300-2.600h1.500v-2.400h-2.400v1.500l-2.600-2.300l2.600-2.300v1.500h2.400v-2.400h-1.500z" fill="#fff" stroke="#3a3a3a" stroke-width=".8" stroke-linejoin="round"/></svg>
<!-- speed widget -->
<div class="b" style="left:1020px;top:320.5px;width:58.7px;height:22px;background:linear-gradient(#fafafa,#e9e9e9 60%,#d6d6d6);border-radius:11px;border:.7px solid #cfcfcf;box-shadow:0 1px 2px rgba(0,0,0,.3)"></div>
<svg class="b" style="left:1007.5px;top:316.8px;" width="29" height="29" viewBox="0 0 29 29"><defs><clipPath id="gc"><circle cx="14.500" cy="14.500" r="12"/></clipPath></defs><circle cx="14.500" cy="14.500" r="13.800" fill="#fdfdfd" stroke="#cfcfcf" stroke-width=".6"/><circle cx="14.500" cy="14.500" r="12" fill="#0e7b5c"/><rect x="0" y="17.300" width="29" height="12" fill="#3fc265" clip-path="url(#gc)"/><ellipse cx="14.500" cy="5.500" rx="5" ry="1.500" fill="#6fc6a8" opacity=".7"/></svg>
<div class="t c " style="left:922px;width:200px;top:325.82px;font-size:8.3px;line-height:9.96px;color:#fff;letter-spacing:-.1px;font-weight:bold;transform:scaleX(.92)">40%</div>
<div class="t " style="left:1053px;top:324.06px;font-size:5.4px;line-height:6.48px;color:#222;font-weight:bold;letter-spacing:-.15px">0K/s</div>
<div class="t " style="left:1053px;top:332.96px;font-size:5.4px;line-height:6.48px;color:#222;font-weight:bold;letter-spacing:-.15px">0K/s</div>
<svg class="b" style="left:1037.5px;top:324px;" width="5" height="15" viewBox="0 0 5 15"><path d="M2.500 .5l1.700 2h-1.100v2.300h-1.200v-2.300h-1.100z" fill="#e2453c"/><path d="M2.500 14l1.700-2h-1.100v-2.300h-1.200v2.300h-1.100z" fill="#2e9a57"/></svg>
<svg class="b" style="left:1064.5px;top:324.5px;" width="13" height="13" viewBox="0 0 13 13"><circle cx="6.300" cy="7.200" r="5.300" fill="#2f74d0"/><path d="M6.300 4.300l.9 1.900l2 .3l-1.500 1.400l.4 2l-1.800-1l-1.800 1l.4-2l-1.500-1.400l2-.3z" fill="#fff"/><circle cx="10.200" cy="2.800" r="2.100" fill="#ea3a30"/></svg>
<!-- watermark text -->
<div class="t wm" style="left:905.500px;top:27.300px;font-size:19.100px;line-height:22px;color:#ff4a36;letter-spacing:0;transform:scaleY(1.13);transform-origin:0 2px;-webkit-text-stroke:.3px #ff4a36;opacity:.93">更多内容请搜索</div>
<div class="t wm" style="left:865.500px;top:53.800px;font-size:19.500px;line-height:22px;color:#ff4a36;letter-spacing:.18px;-webkit-text-stroke:.4px #ff4a36;opacity:.93">Sacrifice1127<span style="font-size:18.700px;margin-left:1.300px;letter-spacing:0">的水利</span><span style="font-size:16.200px;letter-spacing:3.300px;margin-left:1.500px">BIM</span></div>
<!-- tuituisoft -->
<svg class="b" style="left:940px;top:546.5px;" width="50" height="32" viewBox="0 0 50 32"><g opacity=".75"><polygon points="8,8 17,1 26,8 26,30 8,30" fill="#67c6ec"/><polygon points="2,12 10,9 10,30 2,30" fill="#7fd0c8" opacity=".8"/><polygon points="0,21 6,19 6,31 0,31" fill="#a9dfae" opacity=".7"/><path d="M22 14c6-2 13 0 16 5c2 3 2 6 5 6c2 0 3-1.500 3.500-3c.8 3-1 5.500-4 5.500c-2.500 0-3.500-1-4.500-2.500v6h-3.500v-4h-5v4h-3.500v-7c-3-2-5-6-4-10z" fill="#8fd3ee"/><circle cx="35" cy="20" r=".7" fill="#fff"/><rect x="11" y="12" width="2" height="15" fill="#4db3df" opacity=".6"/><rect x="19" y="10" width="2" height="18" fill="#4db3df" opacity=".5"/></g></svg>
<svg class="b" role="img" aria-label="TUITUISOFT" style="left:985px;top:558px" width="92" height="16" viewBox="985 558 92 16"><title>TUITUISOFT</title><g fill="#4f9dc6" opacity=".85"><rect x="989.8" y="560.7" width="6.8" height="3"/><rect x="992.0" y="560.7" width="2.4" height="10.8"/><rect x="999" y="560.7" width="2.4" height="10.8"/><rect x="1004.1" y="560.7" width="2.4" height="10.8"/><rect x="999" y="569.1" width="7.5" height="2.4"/><rect x="1008" y="560.7" width="2.4" height="10.8"/><rect x="1014.5" y="560.7" width="6.8" height="3"/><rect x="1016.7" y="560.7" width="2.4" height="10.8"/><rect x="1023.7" y="560.7" width="2.4" height="10.8"/><rect x="1028.8" y="560.7" width="2.4" height="10.8"/><rect x="1023.7" y="569.1" width="7.5" height="2.4"/><rect x="1033" y="560.7" width="2.4" height="10.8"/><rect x="1038.8" y="560.7" width="7" height="2.4"/><rect x="1038.8" y="564.9" width="7" height="2.4"/><rect x="1038.8" y="569.1" width="7" height="2.4"/><rect x="1038.8" y="560.7" width="2.4" height="6.600"/><rect x="1043.4" y="564.9" width="2.4" height="6.600"/><path d="M1049.2 560.7h7v10.8h-7zM1051.6000000000001 563.1v6.000000000000001h2.2v-6.000000000000001z" fill-rule="evenodd"/><rect x="1057.6" y="560.7" width="2.4" height="10.8"/><rect x="1057.6" y="560.7" width="6.600" height="2.4"/><rect x="1057.6" y="564.9" width="5.3" height="2.200"/><rect x="1066" y="560.7" width="7" height="3"/><rect x="1068.3" y="560.7" width="2.4" height="10.8"/></g></svg>
</div>
</body></html>
